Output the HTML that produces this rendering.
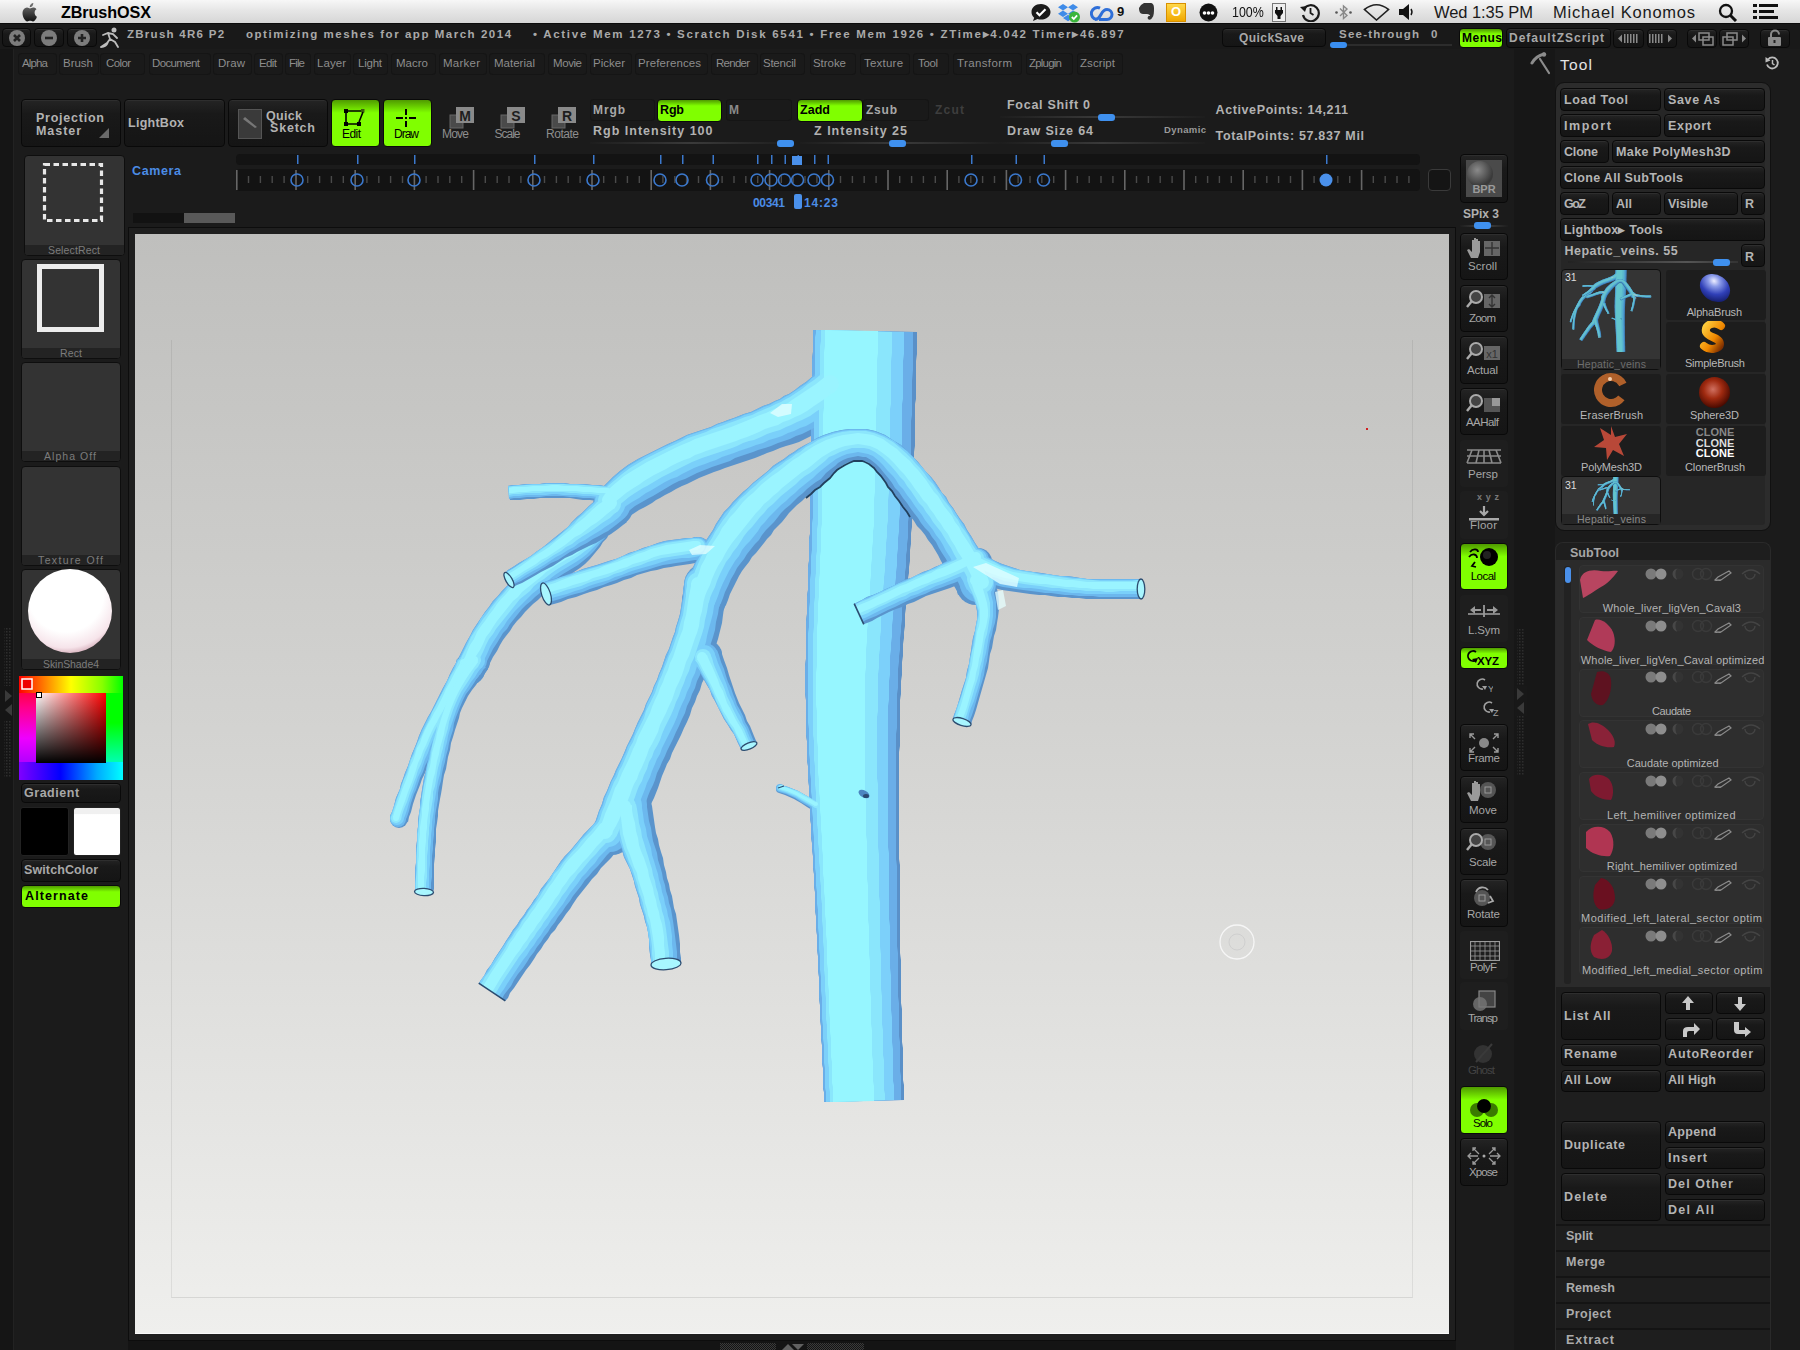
<!DOCTYPE html>
<html><head><meta charset="utf-8">
<style>
*{margin:0;padding:0;box-sizing:border-box}
html,body{width:1800px;height:1350px;overflow:hidden;background:#1b1b1b;font-family:"Liberation Sans",sans-serif}
.a{position:absolute}
.t{white-space:nowrap;line-height:1}
.mb{background:linear-gradient(#f7f7f7,#e6e6e6 45%,#d6d6d6)}
.bt{background:linear-gradient(#242424,#191919 30%,#151515);border:1px solid #090909;border-radius:4px;box-shadow:inset 0 1px 0 #2e2e2e}
.gb{background:linear-gradient(#4f9a00,#80ff00 28%,#80ff00);border:1px solid #0a0a0a;border-radius:4px}
.mn{background:#1a1a1a;border-radius:4px;box-shadow:inset 0 0 0 1px #151515}
.dk{background:#131313;border-radius:4px}
.tile{background:#333;border:1px solid #0e0e0e;border-radius:4px}
.lbl{background:#222}
#canvasframe{left:128px;top:227px;width:1328px;height:1114px;background:#1f1f1f;border:1px solid #0d0d0d}
#canvas{left:135px;top:234px;width:1314px;height:1100px;background:linear-gradient(#bfbfbd,#d3d3d1 45%,#efefed);overflow:hidden}
</style></head><body>
<div class="a" style="left:0;top:48px;width:14px;height:1302px;background:#151515;border-right:1px solid #222"></div>
<div class="a" style="left:1514px;top:48px;width:41px;height:1302px;background:#171717"></div>
<div class="a mb" style="left:0px;top:0px;width:1800px;height:23px;"></div>
<div class="a " style="left:0px;top:23px;width:1800px;height:1px;background:#0c0c0c"></div>
<svg class="a" style="left:21px;top:2px" width="20" height="20" viewBox="0 0 20 20"><defs><linearGradient id="ap" x1="0" y1="0" x2="0" y2="1"><stop offset="0" stop-color="#777"/><stop offset="1" stop-color="#111"/></linearGradient></defs><path fill="url(#ap)" d="M13.6 10.6c0-2.2 1.8-3.2 1.9-3.3-1-1.5-2.6-1.7-3.2-1.7-1.4-.1-2.6.8-3.3.8-.7 0-1.7-.8-2.9-.8C4.6 5.6 3.1 6.5 2.3 8c-1.6 2.8-.4 6.9 1.1 9.2.8 1.1 1.7 2.3 2.8 2.3 1.1 0 1.6-.7 2.9-.7 1.4 0 1.7.7 2.9.7 1.2 0 2-1.1 2.7-2.2.9-1.3 1.2-2.5 1.2-2.6 0 0-2.3-.9-2.3-4.1zM11.4 4c.6-.8 1-1.8.9-2.9-.9 0-2 .6-2.6 1.4-.6.6-1.1 1.7-.9 2.7 1 .1 2-.5 2.6-1.2z"/></svg>
<div class="a t" style="left:61.0px;top:4.4px;font-size:16.2px;font-weight:bold;color:#000;letter-spacing:-0.11px;">ZBrushOSX</div>
<svg class="a" style="left:1030px;top:3px" width="22" height="19" viewBox="0 0 22 19"><path fill="#1a1a1a" d="M11 1C5.5 1 1.5 4.5 1.5 9c0 2.3 1 4.3 2.7 5.7L3 18l4.5-2c1.1.4 2.3.6 3.5.6 5.5 0 9.5-3.5 9.5-7.6S16.5 1 11 1z"/><path fill="none" stroke="#fff" stroke-width="2.2" d="M6.5 9.2l3 3 6-6"/></svg>
<svg class="a" style="left:1057px;top:3px" width="24" height="20" viewBox="0 0 24 20"><path fill="#3f8be8" d="M6 1l5 3.2-5 3.3L1 4.2zM16 1l5 3.2-5 3.3-5-3.3zM1 10.8l5-3.3 5 3.3-5 3.2zM21 10.8l-5-3.3-5 3.3 5 3.2zM6 15l5-3.2 5 3.2-5 3.2z"/><circle cx="17.5" cy="14" r="5.5" fill="#3bb53b"/><path fill="none" stroke="#fff" stroke-width="1.8" d="M14.8 14l2 2 3.3-3.6"/></svg>
<svg class="a" style="left:1090px;top:4px" width="24" height="17" viewBox="0 0 24 17"><path fill="none" stroke="#2f6fd8" stroke-width="3" d="M7 15.5a6 6 0 1 1 3-11.4M9 15.5h8a5 5 0 0 0 0-10c-3 0-4.6 2.3-6 5s-3 5-6 5"/></svg>
<div class="a t" style="left:1117.0px;top:5.0px;font-size:13.0px;font-weight:bold;color:#111;">9</div>
<svg class="a" style="left:1137px;top:2px" width="19" height="20" viewBox="0 0 19 20"><path fill="#333" d="M4 3l3-2h6c3 0 4 2 4 5 0 4 0 8-2 10-1 2-3 2-4 1-1-1 0-3 1-3h1c0-1-1-2-3-2H6C3 12 2 9 2 6z"/></svg>
<div class="a " style="left:1166px;top:3px;width:20px;height:19px;background:linear-gradient(#ffd84a,#f0a800);border:1px solid #d89000"></div>
<div class="a t" style="left:1171.0px;top:4.5px;font-size:13.0px;font-weight:bold;color:#fff;">O</div>
<svg class="a" style="left:1199px;top:3px" width="19" height="19"><circle cx="9.5" cy="9.5" r="9" fill="#111"/><circle cx="5.5" cy="10" r="1.8" fill="#fff"/><circle cx="9.5" cy="10" r="1.8" fill="#fff"/><circle cx="13.5" cy="10" r="1.8" fill="#fff"/></svg>
<div class="a t" style="left:1232px;top:3.5px;font-size:15.5px;color:#111;transform:scaleX(0.8);transform-origin:0 0">100%</div>
<svg class="a" style="left:1272px;top:3px" width="14" height="19"><rect x="0.5" y="0.5" width="13" height="18" fill="#eee" stroke="#777"/><path fill="#111" d="M4 4h1.5v3H8.5V4H10v3h1v3l-2.5 3v3h-3v-3L3 10V7h1z"/></svg>
<svg class="a" style="left:1299px;top:3px" width="21" height="19" viewBox="0 0 21 19"><path fill="none" stroke="#1a1a1a" stroke-width="2.2" d="M5 6a8 8 0 1 1-1 6"/><path fill="#1a1a1a" d="M1 4l5 5 2-6z"/><path fill="none" stroke="#1a1a1a" stroke-width="1.8" d="M11.5 5v5l3 2"/></svg>
<svg class="a" style="left:1334px;top:4px" width="19" height="17" viewBox="0 0 19 17"><path fill="none" stroke="#888" stroke-width="1.4" d="M6 4.5l7 7-3.5 3V2l3.5 3-7 7"/><circle cx="2.5" cy="8.5" r="1.3" fill="#555"/><circle cx="16.5" cy="8.5" r="1.3" fill="#555"/></svg>
<svg class="a" style="left:1363px;top:3px" width="27" height="18" viewBox="0 0 27 18"><path fill="none" stroke="#222" stroke-width="1.6" d="M1.5 6.5Q13.5-3 25.5 6.5L13.5 17z"/></svg>
<svg class="a" style="left:1399px;top:4px" width="15" height="16" viewBox="0 0 15 16"><path fill="#111" d="M0 5h4l6-5v16l-6-5H0z"/><path fill="none" stroke="#111" stroke-width="1.4" d="M12 5q2 3 0 6"/></svg>
<div class="a t" style="left:1434.0px;top:3.6px;font-size:16.5px;font-weight:normal;color:#1a1a1a;letter-spacing:-0.07px;">Wed 1:35 PM</div>
<div class="a t" style="left:1553.0px;top:3.6px;font-size:16.5px;font-weight:normal;color:#1a1a1a;letter-spacing:0.78px;">Michael Konomos</div>
<svg class="a" style="left:1718px;top:3px" width="20" height="19" viewBox="0 0 20 19"><circle cx="8" cy="8" r="6" fill="none" stroke="#111" stroke-width="2.3"/><path stroke="#111" stroke-width="3" d="M12.5 12.5l5.5 5.5"/></svg>
<svg class="a" style="left:1753px;top:4px" width="25" height="16" viewBox="0 0 25 16"><path fill="#111" d="M0 0h4v3H0zM6 0h19v3H6zM0 6h4v3H0zM6 6h15v3H6zM0 12h4v3H0zM6 12h19v3H6z"/></svg>
<div class="a " style="left:0px;top:24px;width:1800px;height:25px;background:#191919"></div>
<div class="a bt" style="left:2px;top:28px;width:29px;height:19px;"></div>
<svg class="a" style="left:8px;top:29px" width="18" height="18" viewBox="-9 -9 18 18"><circle r="8" fill="#7c7c7c"/><path d="M-3,-3L3,3M3,-3L-3,3" stroke="#222" stroke-width="2.6"/></svg>
<div class="a bt" style="left:34px;top:28px;width:30px;height:19px;"></div>
<svg class="a" style="left:40px;top:29px" width="18" height="18" viewBox="-9 -9 18 18"><circle r="8" fill="#7c7c7c"/><path d="M-4,0H4" stroke="#222" stroke-width="2.6"/></svg>
<div class="a bt" style="left:67px;top:28px;width:30px;height:19px;"></div>
<svg class="a" style="left:73px;top:29px" width="18" height="18" viewBox="-9 -9 18 18"><circle r="8" fill="#7c7c7c"/><path d="M-4,0H4M0,-4V4" stroke="#222" stroke-width="2.6"/></svg>
<svg class="a" style="left:99px;top:27px" width="22" height="21" viewBox="0 0 22 21"><g fill="none" stroke="#bdbdbd" stroke-width="1.8" stroke-linecap="round"><circle cx="15" cy="3" r="1.6" fill="#bdbdbd"/><path d="M4 8l5-2 5 1 4 4M9 6l2 6-3 4-6 4M11 12l5 3 3 5M2 20c3 0 6-2 7-5"/></g></svg>
<div class="a t" style="left:127.0px;top:29.4px;font-size:11.5px;font-weight:bold;color:#a9a9a9;letter-spacing:1.27px;">ZBrush 4R6 P2</div>
<div class="a t" style="left:246.0px;top:29.4px;font-size:11.5px;font-weight:bold;color:#a9a9a9;letter-spacing:1.53px;">optimizing meshes for app March 2014</div>
<div class="a t" style="left:533.0px;top:29.4px;font-size:11.5px;font-weight:bold;color:#a9a9a9;letter-spacing:1.71px;">&#8226; Active Mem 1273 &#8226; Scratch Disk 6541 &#8226; Free Mem 1926 &#8226; ZTime&#9656;4.042 Timer&#9656;46.897</div>
<div class="a bt" style="left:1222px;top:28px;width:104px;height:19px;"></div>
<div class="a t" style="left:1239.0px;top:31.6px;font-size:12.0px;font-weight:bold;color:#a8a8a8;letter-spacing:0.45px;">QuickSave</div>
<div class="a t" style="left:1339.0px;top:28.6px;font-size:11.5px;font-weight:bold;color:#a8a8a8;letter-spacing:1.23px;">See-through</div>
<div class="a t" style="left:1431.0px;top:28.6px;font-size:11.5px;font-weight:bold;color:#a8a8a8;">0</div>
<div class="a " style="left:1332px;top:44px;width:120px;height:2px;background:#2c2c2c"></div>
<div class="a " style="left:1330px;top:42px;width:17px;height:6px;background:#3a8ef0;border-radius:3px"></div>
<div class="a gb" style="left:1459px;top:28px;width:44px;height:20px;"></div>
<div class="a t" style="left:1462.0px;top:31.6px;font-size:12.0px;font-weight:bold;color:#000;letter-spacing:0.50px;">Menus</div>
<div class="a bt" style="left:1506px;top:28px;width:105px;height:20px;"></div>
<div class="a t" style="left:1509.0px;top:31.6px;font-size:12.0px;font-weight:bold;color:#a8a8a8;letter-spacing:1.00px;">DefaultZScript</div>
<div class="a bt" style="left:1613px;top:29px;width:31px;height:19px;"></div>
<div class="a bt" style="left:1647px;top:29px;width:30px;height:19px;"></div>
<div class="a bt" style="left:1687px;top:29px;width:30px;height:19px;"></div>
<div class="a bt" style="left:1719px;top:29px;width:30px;height:19px;"></div>
<div class="a bt" style="left:1760px;top:29px;width:30px;height:19px;"></div>
<svg class="a" style="left:1613px;top:29px" width="64" height="19"><g fill="#8a8a8a"><path d="M5 9.5l4-4v8z"/><path d="M11 5h1.5v9H11zM14 5h1.5v9H14zM17 5h1.5v9H17zM20 5h1.5v9H20zM23 5h1.5v9H23z"/><path d="M36 5h1.5v9H36zM39 5h1.5v9H39zM42 5h1.5v9H42zM45 5h1.5v9H45zM48 5h1.5v9H48z"/><path d="M59 9.5l-4-4v8z"/></g></svg>
<svg class="a" style="left:1687px;top:29px" width="64" height="19"><g fill="none" stroke="#8a8a8a" stroke-width="1.5"><rect x="12" y="4" width="10" height="7"/><rect x="16" y="8" width="10" height="8"/><rect x="40" y="4" width="10" height="7"/><rect x="36" y="8" width="10" height="8"/></g><g fill="#8a8a8a"><path d="M5 9.5l4-4v8z"/><path d="M59 9.5l-4-4v8z"/></g></svg>
<svg class="a" style="left:1760px;top:29px" width="30" height="19"><path fill="none" stroke="#8a8a8a" stroke-width="2" d="M11 8V5.5a4 4 0 0 1 8 0"/><rect x="8" y="8" width="13" height="9" rx="1" fill="#8a8a8a"/><rect x="13.5" y="11" width="2" height="3" fill="#222"/></svg>
<div class="a mn" style="left:18px;top:53px;width:39px;height:22px;"></div>
<div class="a t" style="left:22.0px;top:58.1px;font-size:11.5px;font-weight:normal;color:#8d8d8d;letter-spacing:-0.85px;">Alpha</div>
<div class="a mn" style="left:59px;top:53px;width:40px;height:22px;"></div>
<div class="a t" style="left:63.0px;top:58.1px;font-size:11.5px;font-weight:normal;color:#8d8d8d;letter-spacing:-0.01px;">Brush</div>
<div class="a mn" style="left:100px;top:53px;width:45px;height:22px;"></div>
<div class="a t" style="left:106.0px;top:58.1px;font-size:11.5px;font-weight:normal;color:#8d8d8d;letter-spacing:-0.62px;">Color</div>
<div class="a mn" style="left:149px;top:53px;width:62px;height:22px;"></div>
<div class="a t" style="left:152.0px;top:58.1px;font-size:11.5px;font-weight:normal;color:#8d8d8d;letter-spacing:-0.63px;">Document</div>
<div class="a mn" style="left:213px;top:53px;width:39px;height:22px;"></div>
<div class="a t" style="left:218.0px;top:58.1px;font-size:11.5px;font-weight:normal;color:#8d8d8d;letter-spacing:0.06px;">Draw</div>
<div class="a mn" style="left:254px;top:53px;width:29px;height:22px;"></div>
<div class="a t" style="left:259.0px;top:58.1px;font-size:11.5px;font-weight:normal;color:#8d8d8d;letter-spacing:-0.61px;">Edit</div>
<div class="a mn" style="left:285px;top:53px;width:26px;height:22px;"></div>
<div class="a t" style="left:289.0px;top:58.1px;font-size:11.5px;font-weight:normal;color:#8d8d8d;letter-spacing:-0.84px;">File</div>
<div class="a mn" style="left:314px;top:53px;width:37px;height:22px;"></div>
<div class="a t" style="left:317.0px;top:58.1px;font-size:11.5px;font-weight:normal;color:#8d8d8d;letter-spacing:0.06px;">Layer</div>
<div class="a mn" style="left:353px;top:53px;width:35px;height:22px;"></div>
<div class="a t" style="left:358.0px;top:58.1px;font-size:11.5px;font-weight:normal;color:#8d8d8d;letter-spacing:-0.23px;">Light</div>
<div class="a mn" style="left:391px;top:53px;width:45px;height:22px;"></div>
<div class="a t" style="left:396.0px;top:58.1px;font-size:11.5px;font-weight:normal;color:#8d8d8d;letter-spacing:0.01px;">Macro</div>
<div class="a mn" style="left:439px;top:53px;width:48px;height:22px;"></div>
<div class="a t" style="left:443.0px;top:58.1px;font-size:11.5px;font-weight:normal;color:#8d8d8d;letter-spacing:0.24px;">Marker</div>
<div class="a mn" style="left:489px;top:53px;width:56px;height:22px;"></div>
<div class="a t" style="left:494.0px;top:58.1px;font-size:11.5px;font-weight:normal;color:#8d8d8d;letter-spacing:0.01px;">Material</div>
<div class="a mn" style="left:548px;top:53px;width:39px;height:22px;"></div>
<div class="a t" style="left:553.0px;top:58.1px;font-size:11.5px;font-weight:normal;color:#8d8d8d;letter-spacing:-0.42px;">Movie</div>
<div class="a mn" style="left:590px;top:53px;width:42px;height:22px;"></div>
<div class="a t" style="left:593.0px;top:58.1px;font-size:11.5px;font-weight:normal;color:#8d8d8d;letter-spacing:0.01px;">Picker</div>
<div class="a mn" style="left:635px;top:53px;width:73px;height:22px;"></div>
<div class="a t" style="left:638.0px;top:58.1px;font-size:11.5px;font-weight:normal;color:#8d8d8d;letter-spacing:0.10px;">Preferences</div>
<div class="a mn" style="left:711px;top:53px;width:47px;height:22px;"></div>
<div class="a t" style="left:716.0px;top:58.1px;font-size:11.5px;font-weight:normal;color:#8d8d8d;letter-spacing:-0.74px;">Render</div>
<div class="a mn" style="left:760px;top:53px;width:45px;height:22px;"></div>
<div class="a t" style="left:763.0px;top:58.1px;font-size:11.5px;font-weight:normal;color:#8d8d8d;letter-spacing:-0.25px;">Stencil</div>
<div class="a mn" style="left:810px;top:53px;width:46px;height:22px;"></div>
<div class="a t" style="left:813.0px;top:58.1px;font-size:11.5px;font-weight:normal;color:#8d8d8d;letter-spacing:-0.05px;">Stroke</div>
<div class="a mn" style="left:860px;top:53px;width:50px;height:22px;"></div>
<div class="a t" style="left:864.0px;top:58.1px;font-size:11.5px;font-weight:normal;color:#8d8d8d;letter-spacing:0.22px;">Texture</div>
<div class="a mn" style="left:913px;top:53px;width:36px;height:22px;"></div>
<div class="a t" style="left:918.0px;top:58.1px;font-size:11.5px;font-weight:normal;color:#8d8d8d;letter-spacing:-0.37px;">Tool</div>
<div class="a mn" style="left:953px;top:53px;width:69px;height:22px;"></div>
<div class="a t" style="left:957.0px;top:58.1px;font-size:11.5px;font-weight:normal;color:#8d8d8d;letter-spacing:0.38px;">Transform</div>
<div class="a mn" style="left:1026px;top:53px;width:47px;height:22px;"></div>
<div class="a t" style="left:1029.0px;top:58.1px;font-size:11.5px;font-weight:normal;color:#8d8d8d;letter-spacing:-0.79px;">Zplugin</div>
<div class="a mn" style="left:1077px;top:53px;width:46px;height:22px;"></div>
<div class="a t" style="left:1080.0px;top:58.1px;font-size:11.5px;font-weight:normal;color:#8d8d8d;letter-spacing:0.08px;">Zscript</div>
<svg class="a" style="left:1530px;top:51px" width="22" height="24" viewBox="0 0 22 24"><g stroke="#8c8c8c" stroke-linecap="round"><path d="M10 8l9 14" stroke-width="2.2"/><path d="M2 12q4-7 12-9" stroke-width="3" fill="none"/><circle cx="14" cy="3.5" r="2.2" fill="#8c8c8c" stroke="none"/></g></svg>
<div class="a t" style="left:1560.0px;top:57.2px;font-size:15.5px;font-weight:normal;color:#e4e4e4;letter-spacing:1.19px;">Tool</div>
<svg class="a" style="left:1764px;top:55px" width="17" height="16" viewBox="0 0 17 16"><path fill="none" stroke="#bcbcbc" stroke-width="1.8" d="M4 4.5a5.5 5.5 0 1 1-1 5"/><path fill="#bcbcbc" d="M1.5 2l5 3.5-5 2z"/><path stroke="#bcbcbc" stroke-width="1.5" d="M8.5 5v3.5l2 1.5"/></svg>
<div id="canvasframe" class="a"></div>
<div id="canvas" class="a"><div class="a" style="left:36px;top:106px;width:1242px;height:958px;border-left:1px solid rgba(0,0,0,0.07);border-right:1px solid rgba(0,0,0,0.07);border-bottom:1px solid rgba(0,0,0,0.09)"></div></div>
<svg class="a" style="left:0;top:0" width="1800" height="1350" viewBox="0 0 1800 1350"><defs><g id="veinsym"><g><path fill="#5a94cc" d="M457,659 456,663 453,668 450,674 447,681 443,688 440,694 437,700 434,706 431,712 428,717 425,723 422,729 419,736 417,742 415,747 412,754 410,760 408,766 405,773 403,779 401,784 400,789 396,798 394,806 392,812 390,816 L408,822 409,817 411,812 413,804 416,795 418,790 420,785 422,779 425,773 427,767 430,760 432,754 435,749 437,744 440,737 443,732 445,726 448,721 451,716 455,710 458,704 462,698 466,691 470,685 473,679 476,674 479,671Z"/><circle fill="#5a94cc" cx="468" cy="665" r="12"/><circle fill="#5a94cc" cx="399" cy="819" r="9"/><path fill="#5a94cc" d="M468,655 466,658 464,662 461,667 457,673 454,679 450,686 447,693 444,700 442,706 440,712 438,719 436,725 434,732 433,739 431,746 430,752 428,759 427,765 426,771 424,778 423,784 422,790 421,797 420,802 420,808 419,814 418,821 418,827 417,834 417,841 416,848 416,856 416,863 415,870 415,877 415,883 415,888 415,892 L433,892 434,889 434,883 434,878 434,871 434,864 435,856 435,849 436,842 436,835 436,829 437,823 438,816 438,811 439,805 440,799 441,794 442,788 443,781 444,775 446,769 447,763 448,757 450,750 451,743 453,737 455,730 457,724 459,718 460,713 462,708 465,702 468,696 472,690 476,685 479,680 483,676 486,672 488,669Z"/><circle fill="#5a94cc" cx="478" cy="662" r="12"/><path fill="#5a94cc" d="M600,531 596,533 590,535 584,537 577,540 571,542 566,544 561,546 555,549 549,553 542,557 537,560 532,564 527,568 522,572 517,577 512,581 507,586 502,591 498,596 493,601 489,607 485,612 481,618 477,624 473,630 470,636 466,643 463,649 460,655 458,660 457,663 L483,677 485,673 488,668 490,663 493,657 497,651 500,645 503,640 506,636 510,631 513,626 517,621 521,617 525,612 529,608 533,604 538,600 542,596 547,592 551,588 556,584 560,581 565,578 569,575 574,572 580,568 585,564 590,559 595,553 600,547 603,542 606,539Z"/><circle fill="#5a94cc" cx="603" cy="535" r="5"/><circle fill="#5a94cc" cx="470" cy="670" r="15"/></g><g><path fill="#6cb8ee" d="M457,659 456,663 453,668 450,674 447,681 443,688 440,694 437,700 434,706 431,712 428,717 425,723 422,729 419,736 417,742 415,747 412,754 410,760 408,766 405,773 403,779 401,784 400,789 396,798 394,806 392,812 390,816 L405,821 407,817 409,811 411,803 414,794 416,790 418,784 420,778 423,772 425,766 428,760 430,754 432,748 435,743 438,736 440,731 443,725 446,720 449,714 453,709 456,703 460,697 463,690 467,684 471,678 474,673 476,669Z"/><circle fill="#6cb8ee" cx="467" cy="664" r="10"/><circle fill="#6cb8ee" cx="398" cy="819" r="8"/><path fill="#6cb8ee" d="M468,655 466,658 464,662 461,667 457,673 454,679 450,686 447,693 444,700 442,706 440,712 438,719 436,725 434,732 433,739 431,746 430,752 428,759 427,765 426,771 424,778 423,784 422,790 421,797 420,802 420,808 419,814 418,821 418,827 417,834 417,841 416,848 416,856 416,863 415,870 415,877 415,883 415,888 415,892 L431,892 431,888 431,883 432,877 432,871 432,864 432,856 433,849 433,842 434,835 434,829 435,822 435,816 436,810 437,805 438,799 438,793 439,787 441,781 442,774 443,769 445,762 446,756 448,749 449,743 451,736 453,730 454,723 456,717 458,712 460,707 463,700 466,694 470,689 474,683 477,678 480,674 483,670 486,667Z"/><circle fill="#6cb8ee" cx="477" cy="661" r="10"/><path fill="#6cb8ee" d="M600,531 596,533 590,535 584,537 577,540 571,542 566,544 561,546 555,549 549,553 542,557 537,560 532,564 527,568 522,572 517,577 512,581 507,586 502,591 498,596 493,601 489,607 485,612 481,618 477,624 473,630 470,636 466,643 463,649 460,655 458,660 457,663 L480,675 482,672 484,667 487,661 490,655 493,649 497,643 500,638 503,633 507,629 510,624 514,619 518,614 522,609 526,605 531,601 535,597 540,593 544,589 549,585 553,581 557,578 563,574 568,571 573,568 578,565 583,561 589,556 594,551 598,546 602,541 605,538Z"/><circle fill="#6cb8ee" cx="603" cy="534" r="4"/><circle fill="#6cb8ee" cx="468" cy="669" r="13"/></g><g><path fill="#7ad0fa" d="M458,659 456,663 454,668 451,674 447,681 444,688 441,695 438,700 435,706 432,712 429,717 426,723 423,729 420,736 418,742 415,748 413,754 410,760 408,767 406,773 404,779 402,784 400,789 397,798 394,806 392,812 391,816 L403,820 405,816 407,810 409,803 412,794 414,789 416,783 418,777 421,771 423,765 425,759 428,753 430,747 432,742 435,735 438,729 441,724 444,719 447,713 450,707 454,702 457,695 461,689 465,682 468,676 471,672 473,668Z"/><circle fill="#7ad0fa" cx="466" cy="664" r="9"/><circle fill="#7ad0fa" cx="397" cy="818" r="7"/><path fill="#7ad0fa" d="M468,656 467,659 464,663 461,667 458,673 454,679 451,686 447,693 444,700 442,706 440,712 438,719 437,725 435,732 433,739 432,746 430,752 429,759 427,765 426,771 425,778 424,784 423,791 422,797 421,803 420,808 419,814 419,821 418,827 417,834 417,841 417,848 416,856 416,863 416,870 416,877 415,883 415,888 415,892 L429,892 429,888 429,883 429,877 429,871 430,864 430,856 430,849 431,842 431,835 432,828 432,822 433,816 434,810 434,804 435,799 436,793 437,787 438,781 440,774 441,768 442,762 444,756 445,749 447,742 448,736 450,729 452,723 454,717 456,711 458,706 461,699 464,693 468,687 471,682 475,677 478,672 481,668 483,665Z"/><circle fill="#7ad0fa" cx="476" cy="661" r="9"/><path fill="#7ad0fa" d="M600,531 596,533 590,535 584,538 577,540 571,543 566,545 561,547 556,550 549,553 543,557 538,561 533,565 528,568 523,573 517,577 512,582 507,587 503,592 498,597 494,602 490,607 485,613 481,618 478,624 474,630 470,637 467,643 464,650 461,656 459,660 457,664 L477,673 478,670 481,665 484,660 487,654 490,647 493,642 497,636 500,631 504,626 507,621 511,616 515,611 519,607 524,602 528,598 532,594 537,590 542,586 547,582 551,578 555,575 561,571 566,568 571,565 576,562 582,558 587,554 592,549 597,544 601,540 604,537Z"/><circle fill="#7ad0fa" cx="602" cy="534" r="4"/><circle fill="#7ad0fa" cx="467" cy="668" r="11"/></g><g><path fill="#8ce6fc" d="M459,660 457,664 455,669 451,675 448,682 445,688 441,695 438,701 435,707 432,712 430,718 427,724 424,730 421,737 418,742 416,748 414,754 411,760 409,767 407,773 404,779 402,785 401,789 397,799 395,806 393,812 392,817 L401,820 402,815 404,809 407,802 410,793 412,788 414,782 416,777 418,770 421,764 423,758 425,752 428,746 430,741 433,734 436,728 439,723 442,717 445,712 448,706 451,700 455,694 458,687 462,681 465,675 468,670 470,666Z"/><circle fill="#8ce6fc" cx="465" cy="663" r="6"/><circle fill="#8ce6fc" cx="396" cy="818" r="5"/><path fill="#8ce6fc" d="M469,656 468,659 465,663 462,668 459,673 455,680 451,686 448,693 445,701 443,707 441,713 439,719 437,726 436,732 434,739 432,746 431,753 430,759 428,765 427,771 426,778 424,785 423,791 422,797 422,803 421,809 420,815 419,821 419,827 418,834 418,841 417,848 417,856 417,863 417,870 416,877 416,883 416,888 416,892 L426,892 426,888 426,883 427,877 427,871 427,864 427,856 428,849 428,841 429,834 429,828 430,822 430,816 431,810 432,804 433,798 433,792 435,786 436,780 437,773 438,768 440,761 441,755 443,748 444,742 446,735 448,728 449,722 451,716 453,710 455,705 458,698 461,692 465,686 469,680 472,675 475,670 478,667 480,663Z"/><circle fill="#8ce6fc" cx="475" cy="660" r="6"/><path fill="#8ce6fc" d="M600,532 596,533 591,536 584,538 578,541 572,544 567,546 562,548 556,551 550,554 544,558 539,562 534,566 529,570 524,574 518,578 513,583 508,588 504,593 499,598 495,603 491,608 487,614 483,619 479,625 475,631 471,637 468,644 465,650 462,656 460,661 458,664 L473,671 475,668 477,663 480,658 483,652 486,645 489,639 493,634 496,629 500,624 504,619 508,614 512,609 516,604 520,599 525,595 530,591 534,586 539,582 544,579 549,575 553,572 559,568 564,565 569,562 574,559 580,555 585,551 591,547 596,542 600,539 604,536Z"/><circle fill="#8ce6fc" cx="602" cy="534" r="3"/><circle fill="#8ce6fc" cx="466" cy="668" r="8"/></g><g><path fill="#9af4ff" d="M461,661 459,665 456,670 453,676 450,682 446,689 443,696 440,702 437,708 434,713 431,719 428,724 425,730 422,737 420,743 417,748 415,755 413,761 410,767 408,774 406,780 404,785 402,790 399,799 396,807 394,813 393,817 L399,819 400,815 402,809 405,801 408,792 410,787 412,782 414,776 416,770 418,763 421,757 423,751 426,745 428,740 431,733 434,727 437,722 440,716 443,711 446,705 449,699 452,693 456,686 460,679 463,674 466,669 468,665Z"/><circle fill="#9af4ff" cx="464" cy="663" r="4"/><circle fill="#9af4ff" cx="396" cy="818" r="3"/><path fill="#9af4ff" d="M471,657 469,660 467,664 464,669 460,674 457,681 453,687 450,694 447,701 445,707 443,713 441,719 439,726 437,733 436,739 434,746 432,753 431,760 430,766 428,772 427,778 426,785 425,791 424,797 423,803 422,809 422,815 421,821 420,827 420,834 419,841 419,848 419,856 418,863 418,870 418,877 418,883 418,888 417,892 L424,892 424,888 424,883 424,877 425,871 425,863 425,856 425,849 426,841 426,834 427,828 427,822 428,815 429,809 429,804 430,798 431,792 432,786 433,780 435,773 436,767 437,761 439,754 440,748 442,741 444,734 445,728 447,721 449,715 451,709 453,704 456,697 459,691 463,684 466,679 470,673 473,669 476,665 478,662Z"/><circle fill="#9af4ff" cx="474" cy="660" r="4"/><path fill="#9af4ff" d="M601,532 597,534 592,537 585,539 579,543 573,545 568,548 563,550 557,553 551,556 545,560 540,564 535,568 530,571 525,576 520,580 515,585 510,589 506,594 501,599 497,604 493,610 489,615 485,621 481,626 477,632 474,639 470,645 467,652 465,657 462,662 461,665 L470,670 471,666 474,662 476,656 480,650 483,644 486,637 490,632 493,627 497,621 501,616 505,611 509,606 513,601 518,597 522,592 527,588 532,584 537,580 542,576 546,572 551,569 557,565 562,562 567,559 573,556 578,553 583,549 589,545 595,541 600,537 603,535Z"/><circle fill="#9af4ff" cx="602" cy="534" r="2"/><circle fill="#9af4ff" cx="465" cy="668" r="5"/></g><g><path fill="#5a90c8" d="M813,330 813,333 813,337 813,341 813,346 813,352 812,359 812,368 812,379 812,383 812,388 812,393 812,398 812,403 812,408 812,414 811,420 811,425 811,432 811,438 811,444 811,451 811,457 811,464 811,470 811,477 811,484 811,491 810,498 810,505 810,511 810,518 810,523 810,529 810,534 809,539 809,545 809,550 809,556 809,561 808,567 808,573 808,578 808,584 808,590 807,596 807,602 807,608 807,614 806,621 806,627 806,633 806,640 806,646 806,653 806,659 805,666 805,672 805,679 805,686 805,693 806,700 806,705 806,711 806,717 806,723 806,729 806,735 807,741 807,748 807,754 807,760 808,766 808,773 808,779 809,786 809,792 809,798 810,805 810,811 810,818 811,824 811,830 811,837 812,843 812,849 813,856 813,862 813,868 814,874 814,880 814,886 815,892 815,898 815,904 815,910 816,916 816,921 816,928 817,935 817,942 817,949 818,956 818,963 818,970 819,977 819,984 819,991 819,998 820,1005 820,1012 820,1019 821,1026 821,1032 821,1039 822,1045 822,1051 822,1057 822,1063 823,1068 823,1073 823,1078 823,1083 823,1088 824,1092 824,1096 824,1099 824,1102 L904,1100 904,1096 904,1093 904,1089 904,1085 903,1080 903,1076 903,1071 903,1065 903,1060 903,1054 903,1048 902,1042 902,1036 902,1029 902,1023 902,1016 902,1009 901,1003 901,996 901,989 901,982 901,974 901,967 901,960 900,953 900,946 900,939 900,932 900,926 900,919 900,913 900,907 900,902 900,896 900,890 900,884 900,878 900,872 900,865 899,859 899,853 899,847 899,840 899,834 899,828 899,821 899,815 899,809 899,802 899,796 899,790 899,783 899,777 899,771 899,765 899,758 899,752 900,746 900,740 900,734 900,728 900,723 900,717 900,711 900,706 900,700 901,694 901,688 901,681 902,675 902,669 902,662 903,656 903,650 903,644 904,638 904,632 905,626 905,620 905,614 906,608 906,602 907,596 907,590 908,584 908,578 909,573 909,567 910,561 910,556 910,550 911,544 911,539 911,533 912,527 912,522 912,515 913,508 913,501 913,494 913,487 914,480 914,473 914,466 914,459 914,452 915,446 915,440 915,433 915,427 915,421 915,415 915,410 915,404 916,399 916,394 916,390 916,385 916,381 916,370 916,361 917,354 917,348 917,343 917,339 917,335 917,332Z"/><path fill="#5a94cc" d="M818,802 812,799 805,795 798,791 788,787 781,785 L779,793 785,795 794,799 801,803 807,807 812,810Z"/><circle fill="#5a94cc" cx="815" cy="806" r="5"/><circle fill="#5a94cc" cx="780" cy="789" r="4"/><path fill="#5a94cc" d="M820,371 816,373 812,377 806,382 800,386 795,390 789,394 784,396 780,399 775,401 769,404 763,406 757,409 751,412 744,414 739,416 734,418 728,420 723,422 717,424 711,427 705,429 699,431 693,433 687,435 681,438 675,441 668,444 662,447 656,450 650,453 644,456 638,459 633,462 628,465 620,471 613,477 607,483 603,487 600,490 L624,520 628,517 633,514 639,510 645,507 652,503 656,500 660,498 665,495 671,492 676,489 682,486 687,484 693,481 699,478 704,476 709,474 714,472 720,470 725,468 731,466 737,464 743,462 749,460 755,458 760,456 767,453 773,451 780,448 786,446 793,444 799,442 805,439 811,436 819,432 827,427 835,423 841,419 846,416 850,413Z"/><circle fill="#5a94cc" cx="835" cy="392" r="26"/><circle fill="#5a94cc" cx="612" cy="505" r="19"/><path fill="#5a94cc" d="M609,486 604,486 599,485 592,485 584,484 577,484 570,484 564,483 558,483 552,483 546,483 540,484 533,484 526,484 519,485 513,485 508,486 L510,500 514,500 520,500 527,499 534,499 540,498 546,498 552,498 557,498 563,498 570,498 576,499 583,500 590,500 597,501 603,502 607,502Z"/><circle fill="#5a94cc" cx="608" cy="494" r="8"/><path fill="#5a94cc" d="M603,494 600,497 596,500 589,506 586,509 582,513 577,517 572,522 568,527 563,531 558,535 553,539 547,544 542,548 536,552 531,556 526,559 519,563 513,567 508,570 505,573 L513,587 517,585 522,583 529,579 536,575 541,572 547,569 553,566 559,562 565,558 572,555 577,552 583,549 589,546 596,543 601,540 606,537 611,534 618,529 623,525 627,522Z"/><circle fill="#5a94cc" cx="615" cy="508" r="18"/></g><g><path fill="#6aaee8" d="M813,330 813,333 813,337 813,341 813,346 813,352 812,359 812,368 812,379 812,383 812,388 812,393 812,398 812,403 812,408 812,414 811,420 811,425 811,432 811,438 811,444 811,451 811,457 811,464 811,470 811,477 811,484 811,491 810,498 810,505 810,511 810,518 810,523 810,529 810,534 809,539 809,545 809,550 809,556 809,561 808,567 808,573 808,578 808,584 808,590 807,596 807,602 807,608 807,614 806,621 806,627 806,633 806,640 806,646 806,653 806,659 805,666 805,672 805,679 805,686 805,693 806,700 806,705 806,711 806,717 806,723 806,729 806,735 807,741 807,748 807,754 807,760 808,766 808,773 808,779 809,786 809,792 809,798 810,805 810,811 810,818 811,824 811,830 811,837 812,843 812,849 813,856 813,862 813,868 814,874 814,880 814,886 815,892 815,898 815,904 815,910 816,916 816,921 816,928 817,935 817,942 817,949 818,956 818,963 818,970 819,977 819,984 819,991 819,998 820,1005 820,1012 820,1019 821,1026 821,1032 821,1039 822,1045 822,1051 822,1057 822,1063 823,1068 823,1073 823,1078 823,1083 823,1088 824,1092 824,1096 824,1099 824,1102 L901,1100 901,1097 901,1093 901,1089 901,1085 901,1080 901,1076 900,1071 900,1065 900,1060 900,1054 900,1048 900,1042 899,1036 899,1029 899,1023 899,1016 899,1009 899,1003 898,996 898,989 898,982 898,975 898,967 898,960 898,953 897,946 897,939 897,932 897,926 897,919 897,913 897,908 897,902 897,896 897,890 897,884 897,878 897,872 897,866 896,859 896,853 896,847 896,840 896,834 896,828 896,821 896,815 896,809 896,802 896,796 896,790 896,783 896,777 896,771 896,765 896,759 896,752 896,746 896,740 896,734 897,728 897,723 897,717 897,711 897,706 897,700 897,694 898,688 898,681 898,675 898,669 899,662 899,656 900,650 900,644 900,638 901,632 901,626 902,620 902,614 902,608 903,602 903,596 904,590 904,584 905,578 905,572 906,567 906,561 906,555 907,550 907,544 908,538 908,533 908,527 908,522 909,515 909,507 909,500 910,493 910,486 910,479 910,473 910,466 911,459 911,452 911,446 911,439 911,433 911,427 911,421 912,415 912,410 912,404 912,399 912,394 912,390 912,385 912,381 913,370 913,361 913,354 913,348 913,343 913,339 913,335 913,332Z"/><path fill="#6cb8ee" d="M818,802 812,799 805,795 798,791 788,787 781,785 L779,792 786,794 795,798 801,802 808,806 813,809Z"/><circle fill="#6cb8ee" cx="815" cy="805" r="4"/><circle fill="#6cb8ee" cx="780" cy="788" r="4"/><path fill="#6cb8ee" d="M820,371 816,373 812,377 806,382 800,386 795,390 789,394 784,396 780,399 775,401 769,404 763,406 757,409 751,412 744,414 739,416 734,418 728,420 723,422 717,424 711,427 705,429 699,431 693,433 687,435 681,438 675,441 668,444 662,447 656,450 650,453 644,456 638,459 633,462 628,465 620,471 613,477 607,483 603,487 600,490 L621,516 625,514 630,510 635,506 642,502 649,498 653,496 658,493 663,490 668,487 673,484 679,481 685,479 691,476 697,473 702,471 707,469 712,467 718,465 724,463 730,461 735,458 741,456 747,454 753,452 758,450 765,448 771,446 778,443 784,441 790,439 796,436 802,434 808,431 816,427 824,422 831,418 837,414 843,410 846,408Z"/><circle fill="#6cb8ee" cx="833" cy="389" r="23"/><circle fill="#6cb8ee" cx="611" cy="503" r="17"/><path fill="#6cb8ee" d="M609,486 604,486 599,485 592,485 584,484 577,484 570,484 564,483 558,483 552,483 546,483 540,484 533,484 526,484 519,485 513,485 508,486 L509,499 514,498 520,498 527,497 534,497 540,497 546,496 552,496 557,496 563,496 570,497 576,497 583,498 590,498 597,499 603,500 607,500Z"/><circle fill="#6cb8ee" cx="608" cy="493" r="7"/><path fill="#6cb8ee" d="M603,494 600,497 596,500 589,506 586,509 582,513 577,517 572,522 568,527 563,531 558,535 553,539 547,544 542,548 536,552 531,556 526,559 519,563 513,567 508,570 505,573 L512,586 516,583 521,581 528,577 535,573 540,570 545,567 551,563 558,560 564,556 570,552 576,549 581,546 587,543 593,539 599,536 604,533 608,531 616,525 621,521 624,518Z"/><circle fill="#6cb8ee" cx="614" cy="506" r="16"/></g><g><path fill="#7cd0fa" d="M816,330 816,333 815,337 815,341 815,346 815,352 815,359 815,368 815,379 815,383 814,388 814,393 814,398 814,403 814,408 814,414 814,420 814,426 814,432 814,438 814,444 814,451 814,457 814,464 813,470 813,477 813,484 813,491 813,498 813,505 813,511 813,518 812,523 812,529 812,534 812,539 812,545 812,550 811,556 811,561 811,567 811,573 810,579 810,584 810,590 810,596 810,602 809,608 809,615 809,621 809,627 808,633 808,640 808,646 808,653 808,659 808,666 808,672 808,679 808,686 808,693 808,700 808,705 808,711 808,717 808,723 809,729 809,735 809,741 809,748 809,754 810,760 810,766 810,773 811,779 811,785 811,792 812,798 812,805 812,811 813,818 813,824 813,830 814,837 814,843 814,849 815,856 815,862 815,868 816,874 816,880 816,886 817,892 817,898 817,904 818,910 818,916 818,921 818,928 819,935 819,942 819,949 820,956 820,963 820,970 821,977 821,984 821,991 822,998 822,1005 822,1012 822,1019 823,1026 823,1032 823,1039 824,1045 824,1051 824,1057 824,1063 825,1068 825,1073 825,1078 825,1083 825,1088 826,1092 826,1096 826,1099 826,1102 L894,1100 894,1097 894,1093 894,1089 894,1085 893,1081 893,1076 893,1071 893,1066 893,1060 893,1054 893,1049 892,1042 892,1036 892,1030 892,1023 892,1017 891,1010 891,1003 891,996 891,989 891,982 891,975 890,968 890,961 890,954 890,947 890,940 890,933 890,926 889,919 889,913 889,908 889,902 889,896 889,890 889,884 889,878 889,872 889,866 889,860 889,853 888,847 888,841 888,834 888,828 888,822 888,815 888,809 888,803 888,796 888,790 888,784 888,777 888,771 888,765 888,759 888,753 888,746 888,740 888,734 888,729 888,723 888,717 888,711 888,706 889,700 889,694 889,687 889,681 890,675 890,668 890,662 890,656 891,650 891,643 892,637 892,631 892,625 893,619 893,613 894,607 894,601 894,595 895,589 895,584 896,578 896,572 897,566 897,561 897,555 898,549 898,544 898,538 899,532 899,527 899,521 900,514 900,507 900,500 900,493 901,486 901,479 901,472 901,466 901,459 901,452 902,446 902,439 902,433 902,427 902,421 902,415 902,410 902,404 903,399 903,394 903,389 903,385 903,381 903,370 903,361 904,354 904,348 904,343 904,338 904,335 904,332Z"/><path fill="#7ad0fa" d="M817,802 812,799 805,795 798,791 788,787 781,785 L779,791 786,793 795,797 802,801 809,805 814,808Z"/><circle fill="#7ad0fa" cx="816" cy="805" r="4"/><circle fill="#7ad0fa" cx="780" cy="788" r="3"/><path fill="#7ad0fa" d="M821,372 817,375 812,378 807,383 801,387 795,391 789,395 785,397 780,400 775,402 770,405 764,407 758,410 751,413 744,415 740,417 734,419 729,421 723,423 717,425 711,428 705,430 699,432 693,434 687,436 682,439 675,442 669,445 662,448 656,451 650,454 644,457 639,460 634,463 629,466 621,472 614,478 608,484 604,488 601,491 L618,512 622,510 626,506 632,502 639,498 646,493 650,491 655,488 660,485 665,482 671,479 677,477 682,474 688,471 694,468 699,466 705,464 710,462 716,460 722,457 728,455 734,453 739,451 745,449 751,447 756,445 763,443 769,440 776,438 782,436 788,433 794,431 800,428 806,426 813,422 821,417 828,413 834,408 839,405 842,403Z"/><circle fill="#7ad0fa" cx="832" cy="387" r="19"/><circle fill="#7ad0fa" cx="609" cy="502" r="14"/><path fill="#7ad0fa" d="M609,486 604,486 599,486 591,485 584,485 577,484 570,484 564,484 558,484 552,484 546,484 540,484 533,484 526,485 519,485 513,486 508,486 L509,497 514,496 519,496 526,495 534,495 540,495 546,495 552,494 557,494 563,495 570,495 576,495 583,496 591,496 598,497 603,498 608,498Z"/><circle fill="#7ad0fa" cx="608" cy="492" r="6"/><path fill="#7ad0fa" d="M604,495 601,497 596,501 590,506 586,510 582,514 578,518 573,522 568,527 563,532 559,536 553,540 548,544 542,548 536,552 531,556 526,559 520,564 514,568 509,571 505,573 L511,584 515,582 520,579 526,575 533,571 539,568 544,565 550,561 556,557 562,554 568,550 574,547 579,543 585,540 591,536 596,533 601,530 605,527 613,522 618,518 621,515Z"/><circle fill="#7ad0fa" cx="612" cy="505" r="13"/></g><g><path fill="#8ae6fc" d="M821,330 821,333 821,337 821,341 820,346 820,352 820,359 820,368 820,379 820,383 820,388 820,393 820,398 819,403 819,408 819,414 819,420 819,426 819,432 819,438 819,444 819,451 819,457 819,464 819,471 818,477 818,484 818,491 818,498 818,505 818,512 818,518 818,524 817,529 817,534 817,540 817,545 817,551 816,556 816,562 816,567 816,573 815,579 815,585 815,591 815,597 814,603 814,609 814,615 814,621 814,627 813,634 813,640 813,646 813,653 813,659 813,666 813,673 813,679 813,686 813,693 813,700 813,705 813,711 813,717 813,723 813,729 813,735 814,741 814,748 814,754 814,760 815,766 815,773 815,779 815,785 816,792 816,798 816,805 817,811 817,817 817,824 818,830 818,837 818,843 819,849 819,856 819,862 820,868 820,874 820,880 821,886 821,892 821,898 822,904 822,910 822,915 822,921 823,928 823,935 823,942 824,949 824,956 824,963 824,970 825,977 825,984 825,991 826,998 826,1005 826,1012 826,1019 827,1025 827,1032 827,1038 828,1045 828,1051 828,1057 828,1062 829,1068 829,1073 829,1078 829,1083 829,1087 830,1092 830,1095 830,1099 830,1102 L885,1100 885,1097 885,1094 884,1090 884,1085 884,1081 884,1076 884,1071 884,1066 884,1060 883,1055 883,1049 883,1043 883,1036 883,1030 882,1024 882,1017 882,1010 882,1003 882,996 881,989 881,982 881,975 881,968 881,961 881,954 880,947 880,940 880,933 880,926 880,919 880,914 880,908 880,902 879,896 879,890 879,884 879,878 879,872 879,866 879,860 879,854 878,847 878,841 878,835 878,828 878,822 878,816 878,809 878,803 878,797 878,790 878,784 877,778 877,771 877,765 877,759 877,753 877,747 877,741 877,735 877,729 877,723 877,717 878,711 878,706 878,700 878,694 878,687 878,681 878,674 879,668 879,662 879,655 880,649 880,643 880,637 881,631 881,625 881,618 882,612 882,606 883,601 883,595 883,589 884,583 884,577 885,571 885,566 885,560 886,554 886,549 886,543 887,537 887,532 887,526 888,521 888,514 888,507 888,500 889,493 889,486 889,479 889,472 889,465 889,459 890,452 890,446 890,439 890,433 890,427 890,421 890,415 890,409 891,404 891,399 891,394 891,389 891,385 891,381 891,370 891,361 892,353 892,347 892,342 892,338 892,335 892,332Z"/><path fill="#8ce6fc" d="M817,802 812,799 805,795 798,791 788,788 781,785 L780,790 786,792 796,796 802,800 809,804 814,807Z"/><circle fill="#8ce6fc" cx="816" cy="805" r="3"/><circle fill="#8ce6fc" cx="780" cy="788" r="2"/><path fill="#8ce6fc" d="M822,374 819,376 814,380 808,384 802,389 796,393 790,397 786,399 781,402 776,404 770,407 765,409 758,412 752,415 745,417 740,419 735,421 729,423 724,425 718,427 712,429 706,432 700,434 694,436 688,438 682,441 676,444 669,447 663,450 657,453 651,456 645,459 640,462 635,465 630,468 622,474 615,480 609,485 605,489 602,492 L615,508 618,506 623,502 629,497 635,493 643,488 647,486 652,483 657,480 662,477 668,474 674,471 680,468 686,465 692,462 697,460 702,458 708,456 714,454 720,452 726,450 732,448 737,446 743,443 749,441 754,440 761,437 767,434 773,432 780,430 786,427 791,425 797,422 802,420 810,416 817,411 824,407 830,403 835,399 838,397Z"/><circle fill="#8ce6fc" cx="830" cy="385" r="14"/><circle fill="#8ce6fc" cx="608" cy="500" r="10"/><path fill="#8ce6fc" d="M609,487 604,487 598,486 591,486 584,485 577,485 570,485 564,484 558,484 552,484 546,484 540,485 533,485 526,485 519,486 513,486 509,487 L509,495 513,494 519,494 526,493 533,493 540,493 546,492 552,492 557,492 563,492 570,493 576,493 583,494 591,494 598,495 604,495 608,496Z"/><circle fill="#8ce6fc" cx="608" cy="491" r="4"/><path fill="#8ce6fc" d="M605,496 602,499 597,502 591,508 587,511 583,515 578,519 574,524 569,528 564,532 559,536 554,541 548,545 542,549 537,553 531,557 527,560 520,564 514,568 509,571 505,574 L510,582 514,580 519,577 525,573 532,569 537,566 543,562 548,559 554,555 561,551 566,547 572,544 577,540 583,536 588,533 594,529 598,526 602,523 610,518 614,514 618,511Z"/><circle fill="#8ce6fc" cx="611" cy="504" r="10"/></g><g><path fill="#96f6ff" d="M825,330 825,333 825,337 825,341 825,346 824,352 824,359 824,368 824,379 824,383 824,388 824,393 824,398 824,403 824,408 823,414 823,420 823,426 823,432 823,438 823,444 823,451 823,457 823,464 823,471 823,477 822,484 822,491 822,498 822,505 822,512 822,519 822,524 821,529 821,534 821,540 821,545 821,551 820,556 820,562 820,568 820,573 819,579 819,585 819,591 819,597 818,603 818,609 818,615 818,621 817,627 817,634 817,640 817,647 817,653 817,660 817,666 816,673 816,679 816,686 816,693 816,700 816,705 817,711 817,717 817,723 817,729 817,735 817,741 818,747 818,754 818,760 818,766 818,773 819,779 819,785 819,792 820,798 820,804 820,811 821,817 821,824 821,830 822,836 822,843 822,849 823,855 823,862 823,868 823,874 824,880 824,886 824,892 825,898 825,904 825,910 825,915 826,921 826,928 826,935 827,941 827,948 827,956 827,963 828,970 828,977 828,984 829,991 829,998 829,1005 829,1012 830,1019 830,1025 830,1032 831,1038 831,1045 831,1051 831,1057 832,1062 832,1068 832,1073 832,1078 832,1083 833,1087 833,1091 833,1095 833,1099 833,1102 L874,1101 874,1097 874,1094 874,1090 874,1086 873,1081 873,1077 873,1072 873,1066 873,1061 872,1055 872,1049 872,1043 872,1037 872,1030 871,1024 871,1017 871,1010 871,1004 871,997 870,990 870,983 870,975 870,968 870,961 869,954 869,947 869,940 869,933 869,926 868,920 868,914 868,908 868,903 868,897 868,891 868,885 867,879 867,873 867,866 867,860 867,854 867,848 867,841 866,835 866,829 866,822 866,816 866,810 866,803 866,797 865,791 865,784 865,778 865,772 865,765 865,759 865,753 865,747 865,741 865,735 865,729 865,723 865,717 865,711 865,706 865,700 865,694 865,687 865,680 865,674 866,668 866,661 866,655 866,649 867,642 867,636 867,630 868,624 868,618 868,612 869,606 869,600 870,594 870,588 870,582 871,576 871,571 871,565 872,559 872,553 872,548 873,542 873,537 873,531 874,526 874,520 874,513 874,506 874,499 875,492 875,486 875,479 875,472 875,465 876,458 876,452 876,445 876,439 876,433 876,427 876,421 876,415 876,409 877,404 877,399 877,394 877,389 877,384 877,380 877,369 877,360 878,353 878,347 878,342 878,338 878,334 878,331Z"/><path fill="#9af4ff" d="M817,803 812,800 804,796 797,792 788,788 781,786 L780,789 787,791 796,795 803,799 810,803 815,806Z"/><circle fill="#9af4ff" cx="816" cy="804" r="2"/><circle fill="#9af4ff" cx="781" cy="787" r="2"/><path fill="#9af4ff" d="M825,377 821,380 816,384 810,388 804,392 798,396 792,400 788,403 783,405 777,408 772,410 766,413 760,415 753,418 746,421 741,423 736,425 731,427 725,429 719,431 713,433 707,435 701,437 695,439 689,442 684,444 677,447 671,450 665,453 659,456 653,459 647,462 642,465 637,468 632,471 624,476 617,482 611,487 607,492 604,495 L612,505 615,502 620,498 626,493 632,489 640,484 644,481 649,478 654,475 660,472 666,469 671,466 677,463 684,460 690,458 695,455 701,453 706,451 712,449 718,447 724,445 730,443 736,441 741,439 747,437 752,435 759,432 765,429 771,427 778,425 783,422 789,420 795,417 800,415 807,411 814,406 820,402 826,398 831,394 835,392Z"/><circle fill="#9af4ff" cx="830" cy="384" r="9"/><circle fill="#9af4ff" cx="608" cy="500" r="6"/><path fill="#9af4ff" d="M608,488 604,488 598,488 591,487 584,487 577,486 570,486 564,486 558,485 552,485 546,486 540,486 533,486 526,487 519,487 513,487 509,488 L509,493 513,493 519,492 526,492 533,491 540,491 546,491 552,491 557,491 564,491 570,491 576,491 583,492 591,492 598,493 604,493 608,494Z"/><circle fill="#9af4ff" cx="608" cy="491" r="3"/><path fill="#9af4ff" d="M607,498 604,501 599,504 592,510 589,513 585,517 580,521 575,525 570,530 565,534 560,538 555,542 549,547 543,551 538,554 532,558 528,561 521,566 515,570 510,573 506,575 L509,580 513,578 518,575 524,571 531,567 536,564 541,560 547,557 553,553 559,549 565,545 570,541 575,537 581,534 586,530 591,526 596,523 600,520 607,514 612,510 615,508Z"/><circle fill="#9af4ff" cx="611" cy="503" r="6"/></g><g><path fill="#5a94cc" d="M994,575 992,572 989,567 986,562 982,556 979,549 975,543 971,536 967,530 964,524 960,519 956,513 953,508 949,503 946,497 942,493 939,488 935,482 931,477 926,472 922,467 918,462 914,458 907,451 901,445 894,441 885,435 875,431 866,429 858,429 850,429 842,430 833,432 824,435 817,438 811,442 805,445 798,449 794,452 789,455 784,459 779,462 773,466 768,471 763,475 758,479 753,483 748,488 743,492 738,497 733,502 729,507 724,512 720,518 716,524 713,530 709,536 705,542 702,549 699,556 695,563 692,570 690,577 687,583 686,588 684,592 L724,608 726,605 728,600 730,594 733,588 736,582 739,576 742,571 745,567 749,562 752,557 756,553 760,548 764,543 767,539 771,535 774,530 778,526 782,522 786,517 789,513 793,509 797,505 802,501 806,497 811,494 815,490 820,486 824,483 830,477 834,473 837,470 840,467 845,464 849,462 854,461 858,460 862,461 865,461 869,463 874,467 877,471 881,476 886,482 888,486 892,491 895,495 899,501 903,506 907,512 910,516 914,521 917,526 921,530 925,535 928,540 932,545 935,550 938,555 941,561 945,568 948,574 951,580 954,586 957,591 958,595Z"/><circle fill="#5a94cc" cx="976" cy="585" r="20"/><circle fill="#5a94cc" cx="704" cy="600" r="22"/><path fill="#5a94cc" d="M696,537 692,538 687,538 680,539 672,540 665,541 658,543 650,546 643,548 636,551 629,553 623,556 616,559 609,561 603,563 597,565 590,567 583,569 576,572 569,574 561,577 554,579 547,581 542,583 L550,605 554,604 561,602 568,599 576,597 584,594 590,592 597,590 604,587 611,585 617,583 624,580 631,578 637,575 644,573 651,571 657,570 664,568 671,567 676,566 683,565 690,564 695,563 700,563Z"/><circle fill="#5a94cc" cx="698" cy="550" r="13"/><path fill="#5a94cc" d="M685,582 684,585 683,590 683,596 682,601 681,608 680,614 678,621 676,627 675,632 673,637 671,643 669,649 666,655 664,661 662,667 659,674 657,680 654,686 652,692 649,698 646,704 644,710 641,716 638,722 635,729 633,734 630,740 627,746 625,751 622,758 619,764 616,770 614,775 611,781 609,786 607,791 604,797 602,804 599,811 597,817 595,823 594,827 L630,843 632,840 635,835 639,829 642,823 646,816 649,809 651,804 654,798 656,793 658,788 660,782 662,776 665,769 667,764 670,759 672,753 675,747 678,741 681,735 684,728 687,722 690,715 692,708 695,702 697,696 700,690 702,683 705,677 707,670 710,664 712,657 714,651 716,645 718,639 720,631 722,623 723,615 724,608 725,602 726,596 727,592 727,588Z"/><circle fill="#5a94cc" cx="706" cy="585" r="22"/><circle fill="#5a94cc" cx="612" cy="835" r="20"/><path fill="#5a94cc" d="M693,661 696,665 699,671 703,678 707,685 710,690 712,696 715,701 718,707 721,713 724,719 728,725 731,730 734,734 738,743 741,749 L757,743 754,736 750,726 747,721 745,715 742,709 739,703 737,698 735,693 733,687 731,681 729,675 727,668 724,660 722,654 721,649Z"/><circle fill="#5a94cc" cx="707" cy="655" r="15"/><path fill="#5a94cc" d="M599,818 596,821 593,825 589,829 584,834 580,839 575,845 570,851 565,856 561,861 557,867 553,873 549,879 545,884 541,889 538,895 534,900 531,905 527,910 524,915 520,920 517,925 513,930 510,935 506,941 503,946 499,952 495,958 491,965 487,970 484,976 481,980 479,983 L505,1001 508,998 510,993 514,988 518,982 522,976 526,970 530,965 534,959 537,954 541,949 544,944 548,939 551,934 555,930 558,925 562,920 566,914 570,909 573,904 577,898 581,893 585,888 589,883 592,879 597,874 601,868 606,863 611,858 615,853 619,849 623,845 625,842Z"/><circle fill="#5a94cc" cx="612" cy="830" r="18"/><path fill="#5a94cc" d="M613,808 614,813 615,819 616,827 618,835 620,843 622,850 624,857 627,863 630,869 632,875 634,881 635,886 637,892 639,898 640,904 642,910 644,916 645,921 647,927 648,932 649,939 649,946 650,954 651,960 651,965 L681,963 681,958 680,952 680,944 679,935 678,928 677,921 676,914 674,908 673,902 672,896 670,890 669,884 667,878 666,872 664,865 663,858 661,852 659,845 658,839 656,833 655,827 654,820 653,813 652,806 651,802Z"/><circle fill="#5a94cc" cx="632" cy="805" r="19"/><path fill="#5a94cc" d="M977,552 982,554 988,557 995,561 1002,564 1008,566 1014,568 1020,570 1026,571 1033,572 1041,573 1047,574 1053,575 1060,576 1067,576 1074,577 1080,578 1087,579 1093,579 1100,579 1107,579 1113,579 1120,579 1127,579 1132,579 1137,579 1141,579 L1141,599 1137,599 1133,599 1127,599 1120,599 1114,599 1106,599 1099,599 1093,599 1086,599 1079,598 1072,598 1065,597 1058,597 1051,596 1045,595 1039,595 1030,594 1023,593 1016,592 1009,591 1002,590 994,588 985,585 978,583 971,581 967,580Z"/><circle fill="#5a94cc" cx="972" cy="566" r="15"/><path fill="#5a94cc" d="M966,582 968,587 970,593 973,599 976,605 977,611 977,615 977,620 976,625 975,631 973,638 972,644 971,651 970,657 969,664 967,671 966,678 964,684 962,690 960,697 958,704 956,710 954,715 953,719 L971,725 972,721 974,716 976,710 978,703 980,696 982,689 984,682 986,675 988,668 989,661 990,654 992,648 993,642 994,636 996,630 997,623 998,617 999,609 999,601 998,593 996,585 995,578 994,574Z"/><circle fill="#5a94cc" cx="980" cy="578" r="15"/><path fill="#5a94cc" d="M972,549 969,551 964,553 958,556 952,559 945,562 940,565 935,567 929,570 923,572 917,575 911,578 904,580 899,583 893,586 886,589 880,592 873,595 867,597 862,600 858,602 854,604 L864,624 867,623 872,621 877,618 883,615 889,612 896,609 902,607 908,604 914,602 920,599 926,596 932,594 938,592 944,590 950,588 955,586 962,583 969,580 975,578 980,576 984,575Z"/><circle fill="#5a94cc" cx="978" cy="562" r="14"/></g><g><path fill="#6cb8ee" d="M994,575 992,572 989,567 986,562 982,556 979,549 975,543 971,536 967,530 964,524 960,519 956,513 953,508 949,503 946,497 942,493 939,488 935,482 931,477 926,472 922,467 918,462 914,458 907,451 901,445 894,441 885,435 875,431 866,429 858,429 850,429 842,430 833,432 824,435 817,438 811,442 805,445 798,449 794,452 789,455 784,459 779,462 773,466 768,471 763,475 758,479 753,483 748,488 743,492 738,497 733,502 729,507 724,512 720,518 716,524 713,530 709,536 705,542 702,549 699,556 695,563 692,570 690,577 687,583 686,588 684,592 L719,606 721,603 723,598 725,592 728,586 731,579 734,574 737,568 740,564 744,559 747,554 751,549 755,544 759,540 762,535 766,530 770,526 774,522 778,517 781,513 785,509 790,505 794,501 798,497 803,493 807,489 812,485 816,482 821,479 826,473 831,469 835,466 838,463 843,460 848,458 853,457 858,456 863,457 866,457 871,460 876,464 880,468 884,473 889,479 892,483 895,488 899,492 903,498 907,503 911,509 914,513 918,518 921,523 925,528 929,532 932,537 936,542 939,548 942,553 946,559 949,565 952,572 956,578 959,584 961,589 963,592Z"/><circle fill="#6cb8ee" cx="978" cy="584" r="18"/><circle fill="#6cb8ee" cx="702" cy="599" r="19"/><path fill="#6cb8ee" d="M696,537 692,538 687,538 680,539 672,540 665,541 658,543 650,546 643,548 636,551 629,553 623,556 616,559 609,561 603,563 597,565 590,567 583,569 576,572 569,574 561,577 554,579 547,581 542,583 L549,602 553,601 560,599 568,596 575,594 583,592 590,589 596,587 603,585 610,582 616,580 623,577 630,575 636,573 643,571 650,569 656,567 663,565 670,564 676,563 683,562 689,561 695,560 699,560Z"/><circle fill="#6cb8ee" cx="698" cy="548" r="11"/><path fill="#6cb8ee" d="M685,582 684,585 683,590 683,596 682,601 681,608 680,614 678,621 676,627 675,632 673,637 671,643 669,649 666,655 664,661 662,667 659,674 657,680 654,686 652,692 649,698 646,704 644,710 641,716 638,722 635,729 633,734 630,740 627,746 625,751 622,758 619,764 616,770 614,775 611,781 609,786 607,791 604,797 602,804 599,811 597,817 595,823 594,827 L626,841 628,838 630,833 634,827 637,820 641,814 644,807 646,802 648,796 650,791 653,785 655,780 657,773 660,767 662,762 665,756 667,751 670,745 673,739 676,732 679,726 682,719 685,713 687,706 690,700 692,694 695,688 697,681 700,675 702,668 704,662 707,655 709,649 711,643 713,637 715,630 716,622 718,614 719,607 720,601 721,595 721,591 722,588Z"/><circle fill="#6cb8ee" cx="703" cy="585" r="19"/><circle fill="#6cb8ee" cx="610" cy="834" r="18"/><path fill="#6cb8ee" d="M693,661 696,665 699,671 703,678 707,685 710,690 712,696 715,701 718,707 721,713 724,719 728,725 731,730 734,734 738,743 741,749 L755,744 752,737 748,727 745,722 743,716 740,710 737,705 735,699 733,694 731,688 728,682 726,676 724,669 721,662 719,655 717,650Z"/><circle fill="#6cb8ee" cx="705" cy="656" r="13"/><path fill="#6cb8ee" d="M599,818 596,821 593,825 589,829 584,834 580,839 575,845 570,851 565,856 561,861 557,867 553,873 549,879 545,884 541,889 538,895 534,900 531,905 527,910 524,915 520,920 517,925 513,930 510,935 506,941 503,946 499,952 495,958 491,965 487,970 484,976 481,980 479,983 L502,999 504,995 507,991 511,986 514,980 518,974 523,968 527,962 530,957 534,952 537,947 541,942 544,937 548,932 551,927 555,922 558,917 562,912 566,906 570,901 573,896 577,891 581,886 585,880 589,876 593,871 598,866 603,860 607,855 612,850 616,846 619,842 622,839Z"/><circle fill="#6cb8ee" cx="610" cy="829" r="16"/><path fill="#6cb8ee" d="M613,808 614,813 615,819 616,827 618,835 620,843 622,850 624,857 627,863 630,869 632,875 634,881 635,886 637,892 639,898 640,904 642,910 644,916 645,921 647,927 648,932 649,939 649,946 650,954 651,960 651,965 L677,963 677,959 677,952 676,944 675,936 674,928 673,921 672,915 671,909 669,903 668,897 666,891 665,885 663,879 662,873 660,866 658,860 657,853 655,847 653,841 652,835 651,828 649,821 648,814 647,807 646,803Z"/><circle fill="#6cb8ee" cx="630" cy="805" r="17"/><path fill="#6cb8ee" d="M977,552 982,554 988,557 995,561 1002,564 1008,566 1014,568 1020,570 1026,571 1033,572 1041,573 1047,574 1053,575 1060,576 1067,576 1074,577 1080,578 1087,579 1093,579 1100,579 1107,579 1113,579 1120,579 1127,579 1132,579 1137,579 1141,579 L1141,596 1137,597 1133,597 1127,597 1120,597 1113,597 1106,597 1099,597 1093,596 1086,596 1079,596 1072,595 1065,595 1058,594 1051,593 1045,593 1039,592 1031,591 1023,590 1016,589 1010,588 1003,587 995,585 987,582 979,580 972,578 968,576Z"/><circle fill="#6cb8ee" cx="973" cy="564" r="13"/><path fill="#6cb8ee" d="M966,582 968,587 970,593 973,599 976,605 977,611 977,615 977,620 976,625 975,631 973,638 972,644 971,651 970,657 969,664 967,671 966,678 964,684 962,690 960,697 958,704 956,710 954,715 953,719 L969,724 970,720 972,715 974,709 976,702 978,695 980,688 982,682 984,675 985,668 987,661 988,654 989,647 990,641 992,635 993,629 995,623 996,617 996,609 996,602 994,593 993,586 992,579 991,575Z"/><circle fill="#6cb8ee" cx="978" cy="579" r="13"/><path fill="#6cb8ee" d="M972,549 969,551 964,553 958,556 952,559 945,562 940,565 935,567 929,570 923,572 917,575 911,578 904,580 899,583 893,586 886,589 880,592 873,595 867,597 862,600 858,602 854,604 L863,622 866,620 871,618 876,616 882,613 888,610 895,607 901,604 907,601 912,599 919,596 925,594 931,591 937,589 943,587 948,585 954,583 961,580 967,577 973,575 978,573 982,572Z"/><circle fill="#6cb8ee" cx="977" cy="560" r="12"/></g><g><path fill="#7ad0fa" d="M993,576 991,573 988,568 985,562 981,556 978,550 974,543 970,537 966,530 963,525 959,519 956,514 952,508 948,503 945,498 942,493 938,489 934,483 930,477 926,472 922,467 918,463 914,458 907,451 900,446 894,441 885,436 875,432 866,430 858,430 850,430 842,431 833,433 824,436 817,439 811,442 805,446 799,450 795,453 790,456 785,460 780,463 774,467 769,471 763,476 758,480 753,484 749,488 744,493 739,498 734,503 730,508 725,513 721,519 717,525 714,531 710,537 706,543 703,549 700,556 696,563 693,571 691,577 688,584 687,588 685,592 L714,604 716,601 718,596 720,590 723,583 726,577 729,571 732,566 735,561 739,556 742,550 746,545 750,541 754,536 758,531 761,526 765,522 769,517 773,513 777,509 781,505 786,501 790,497 795,493 799,489 804,485 809,481 813,478 817,474 823,469 828,465 832,462 836,459 842,456 847,454 853,453 858,452 863,453 868,454 873,456 879,461 883,465 887,470 893,476 896,480 899,485 903,489 907,495 911,500 915,506 918,510 922,515 925,520 929,525 933,530 936,535 940,540 943,545 946,551 950,557 953,563 957,570 960,576 963,581 965,586 967,590Z"/><circle fill="#7ad0fa" cx="980" cy="583" r="14"/><circle fill="#7ad0fa" cx="700" cy="598" r="16"/><path fill="#7ad0fa" d="M697,538 693,538 687,539 680,540 672,541 666,542 658,544 650,546 643,549 636,551 629,554 623,556 616,559 609,562 603,564 597,566 590,568 583,570 576,572 569,575 561,577 554,580 547,582 543,584 L548,599 552,598 559,596 567,594 575,591 582,589 589,586 595,584 602,582 609,580 615,577 622,575 629,572 635,570 642,568 649,566 656,564 662,562 669,560 675,559 682,558 689,558 695,557 699,556Z"/><circle fill="#7ad0fa" cx="698" cy="547" r="9"/><path fill="#7ad0fa" d="M686,582 685,586 685,590 684,596 683,602 682,608 681,614 679,621 677,627 676,632 674,638 672,643 670,649 668,655 665,662 663,668 660,674 658,680 655,686 653,692 650,698 647,704 645,711 642,717 639,723 636,729 634,735 631,741 628,746 626,752 623,758 620,765 617,771 615,776 612,781 610,786 608,791 605,798 603,805 600,811 598,818 596,823 595,827 L621,839 623,836 626,831 629,825 632,818 635,811 639,805 641,799 643,794 645,789 647,783 650,777 652,771 655,764 657,759 660,754 662,748 665,742 668,736 671,730 674,724 677,717 679,711 682,704 685,698 687,692 690,686 692,679 695,673 697,666 699,660 702,654 704,648 706,642 707,636 709,628 711,621 713,613 714,606 715,600 715,595 716,590 717,587Z"/><circle fill="#7ad0fa" cx="701" cy="584" r="16"/><circle fill="#7ad0fa" cx="608" cy="833" r="14"/><path fill="#7ad0fa" d="M694,661 696,665 700,671 704,678 708,685 710,690 713,695 716,701 718,707 721,712 725,719 728,724 732,729 734,734 739,743 742,749 L753,744 750,738 746,728 743,723 741,717 738,712 735,706 733,701 730,695 728,689 726,683 724,678 721,670 718,663 716,657 714,652Z"/><circle fill="#7ad0fa" cx="704" cy="656" r="11"/><path fill="#7ad0fa" d="M599,819 597,821 593,825 589,830 585,835 580,840 575,846 571,851 566,857 562,862 557,868 553,873 549,879 546,885 542,890 538,895 535,901 531,906 528,911 525,916 521,921 518,926 514,931 511,936 507,941 503,947 499,953 495,959 491,965 488,971 484,976 481,980 479,984 L499,996 501,993 504,989 507,984 511,978 515,972 519,966 523,960 527,955 530,950 534,945 537,940 541,935 544,930 548,925 551,920 555,915 559,909 563,904 566,899 570,893 574,888 578,883 582,877 586,873 590,868 595,863 599,857 604,852 609,847 613,843 616,839 619,836Z"/><circle fill="#7ad0fa" cx="609" cy="827" r="13"/><path fill="#7ad0fa" d="M614,808 615,812 616,819 617,826 619,835 620,842 623,850 625,856 628,863 630,869 633,875 634,880 636,886 638,892 640,898 641,904 643,910 645,916 646,921 647,927 648,932 649,939 650,946 651,954 651,960 652,965 L673,963 673,959 673,952 672,944 672,936 671,929 670,922 668,916 667,910 665,904 664,898 662,892 661,886 659,880 658,874 656,868 654,861 652,855 651,848 649,842 647,836 646,829 644,822 643,814 642,808 641,803Z"/><circle fill="#7ad0fa" cx="628" cy="806" r="14"/><path fill="#7ad0fa" d="M977,553 982,555 988,558 994,561 1001,565 1008,567 1014,569 1020,570 1026,571 1033,572 1041,574 1047,574 1053,575 1060,576 1067,577 1074,578 1080,578 1087,579 1093,580 1100,580 1107,580 1113,580 1120,580 1127,580 1132,580 1137,580 1141,580 L1141,594 1137,594 1133,594 1127,594 1120,594 1113,594 1106,594 1099,594 1093,594 1086,594 1079,593 1072,593 1065,592 1058,591 1052,591 1045,590 1039,589 1031,588 1024,588 1017,587 1010,585 1003,584 996,582 988,579 980,577 974,575 969,573Z"/><circle fill="#7ad0fa" cx="973" cy="563" r="11"/><path fill="#7ad0fa" d="M966,582 968,586 971,592 974,599 976,605 978,611 978,615 977,620 976,625 975,631 974,638 973,644 972,651 970,658 969,664 968,671 966,678 965,684 963,690 961,697 958,704 956,710 955,715 953,719 L967,723 968,720 969,714 971,708 974,701 976,694 978,688 980,681 981,674 983,667 984,660 986,653 987,647 988,641 989,635 991,629 992,623 993,616 993,610 993,602 991,594 990,587 988,580 987,576Z"/><circle fill="#7ad0fa" cx="977" cy="579" r="11"/><path fill="#7ad0fa" d="M973,550 969,552 964,554 959,557 952,560 945,563 940,565 935,568 930,570 924,573 917,575 911,578 905,581 899,583 893,586 887,589 880,592 874,595 868,598 862,600 858,603 854,604 L861,619 865,618 869,616 875,613 881,610 887,607 894,604 900,601 906,599 911,596 918,594 924,591 930,589 936,586 942,584 947,582 952,580 959,577 966,574 972,572 977,570 981,568Z"/><circle fill="#7ad0fa" cx="977" cy="559" r="10"/></g><g><path fill="#8ce6fc" d="M991,577 989,573 987,569 983,563 980,557 976,550 972,544 969,537 965,531 961,526 958,520 954,515 951,509 947,504 943,499 940,494 937,490 933,484 928,479 924,473 920,468 916,464 912,459 906,453 899,447 893,442 884,437 874,433 866,431 858,431 850,431 842,432 834,434 825,437 818,440 812,444 806,447 800,452 796,454 791,458 786,461 781,465 775,469 770,473 765,477 760,481 755,486 750,490 745,495 740,499 736,504 731,509 727,515 723,520 719,526 715,532 712,538 708,544 705,550 701,557 698,564 695,571 693,578 690,584 688,589 687,593 L708,602 710,598 712,593 715,587 717,581 720,574 723,568 726,562 730,557 733,552 737,547 741,541 744,536 748,531 752,527 756,522 760,517 764,513 768,508 773,504 777,500 781,496 786,492 791,488 796,484 800,480 805,476 810,473 814,470 820,465 825,461 829,457 834,455 840,452 846,450 852,448 858,448 864,448 869,449 875,452 882,457 886,461 891,466 897,473 900,477 904,481 907,486 911,491 915,497 919,503 923,507 926,512 930,517 933,522 937,527 941,532 944,537 947,542 951,548 954,554 958,561 961,567 965,573 968,579 970,584 972,587Z"/><circle fill="#8ce6fc" cx="982" cy="582" r="11"/><circle fill="#8ce6fc" cx="698" cy="597" r="12"/><path fill="#8ce6fc" d="M697,539 693,539 687,540 680,541 673,542 666,543 658,545 651,547 644,550 637,552 630,555 623,557 617,560 610,563 604,565 597,567 590,569 584,571 577,573 570,576 562,578 554,581 548,583 543,585 L547,596 551,595 558,593 566,590 574,588 581,586 588,583 594,581 601,579 608,577 614,574 621,572 628,569 634,567 641,565 648,562 655,560 662,558 669,557 675,556 682,555 688,554 694,553 698,553Z"/><circle fill="#8ce6fc" cx="698" cy="546" r="7"/><path fill="#8ce6fc" d="M688,582 687,586 686,591 686,596 685,602 684,608 683,615 681,621 679,628 678,633 676,638 674,644 672,650 669,656 667,662 664,669 662,675 659,681 657,687 655,693 652,699 649,705 646,711 644,718 641,724 638,730 635,736 633,742 630,747 628,752 625,759 622,766 619,771 617,777 614,782 612,787 610,792 607,799 605,805 602,812 600,819 598,824 596,828 L616,837 618,833 620,828 623,822 626,815 630,809 633,802 635,797 637,791 639,786 642,781 644,775 647,769 649,762 652,757 654,751 657,746 660,740 662,734 665,727 668,721 671,715 674,708 676,702 679,696 681,690 684,683 686,677 689,671 691,664 694,658 696,652 698,646 700,640 702,634 704,627 705,620 707,612 708,606 709,599 709,594 710,589 711,586Z"/><circle fill="#8ce6fc" cx="699" cy="584" r="12"/><circle fill="#8ce6fc" cx="606" cy="832" r="11"/><path fill="#8ce6fc" d="M695,660 698,664 701,670 705,677 709,684 711,689 714,695 716,701 719,706 722,712 725,718 729,724 732,729 735,733 739,742 742,749 L751,745 748,739 744,729 741,724 738,719 735,713 732,707 730,702 727,696 725,690 723,685 720,679 717,672 714,665 712,658 710,654Z"/><circle fill="#8ce6fc" cx="703" cy="657" r="8"/><path fill="#8ce6fc" d="M600,820 598,823 595,826 591,831 586,836 581,841 577,847 572,852 567,858 563,863 559,869 554,874 551,880 547,885 543,891 540,896 536,902 533,906 529,911 526,916 522,921 519,927 515,932 512,937 508,942 505,948 501,954 497,960 493,966 489,972 485,977 483,981 481,984 L495,994 497,991 500,986 503,981 507,975 511,969 515,963 519,957 523,952 527,947 530,942 534,937 537,932 541,927 544,922 548,917 551,912 555,907 559,901 562,896 566,891 570,885 574,880 578,874 582,870 586,865 591,859 596,854 600,849 605,844 609,839 612,835 615,833Z"/><circle fill="#8ce6fc" cx="608" cy="826" r="10"/><path fill="#8ce6fc" d="M616,808 617,812 618,819 619,826 620,834 622,842 624,849 627,856 629,862 632,868 634,874 636,880 638,886 639,892 641,897 643,903 644,909 646,915 647,921 649,926 650,932 651,939 652,946 652,954 653,960 653,965 L669,964 669,959 669,952 668,945 667,937 666,929 665,923 664,917 662,911 661,905 659,899 658,893 656,887 655,881 653,875 652,869 650,863 648,856 646,850 644,843 642,837 641,830 639,823 638,815 637,809 636,804Z"/><circle fill="#8ce6fc" cx="626" cy="806" r="10"/><path fill="#8ce6fc" d="M977,554 981,556 987,559 994,562 1001,566 1008,568 1014,570 1020,571 1026,572 1033,573 1041,575 1047,575 1053,576 1060,577 1067,578 1073,579 1080,579 1087,580 1093,580 1100,581 1107,581 1113,581 1120,581 1127,581 1132,581 1137,580 1141,580 L1141,591 1137,591 1133,591 1127,591 1120,591 1113,592 1106,592 1100,591 1093,591 1086,591 1080,590 1072,590 1065,589 1059,588 1052,588 1046,587 1040,586 1031,585 1024,584 1018,583 1011,582 1004,581 997,578 989,576 982,573 975,571 971,569Z"/><circle fill="#8ce6fc" cx="974" cy="562" r="8"/><path fill="#8ce6fc" d="M968,582 969,586 972,592 975,599 977,605 979,611 979,615 978,620 977,625 976,631 975,638 974,645 972,651 971,658 970,664 969,671 967,678 965,684 963,691 961,698 959,704 957,710 955,716 954,720 L964,723 965,719 967,714 969,707 971,701 973,694 975,687 977,681 979,674 980,667 982,660 983,653 984,646 985,640 987,634 988,628 989,622 990,616 990,610 990,603 988,595 986,588 984,581 983,577Z"/><circle fill="#8ce6fc" cx="975" cy="579" r="8"/><path fill="#8ce6fc" d="M973,551 970,553 965,555 959,558 953,561 946,564 941,566 936,569 930,571 924,574 918,576 912,579 905,582 900,584 893,587 887,590 881,593 874,596 868,599 863,601 858,603 855,605 L860,616 863,615 868,613 873,610 879,607 886,604 892,601 899,598 905,596 910,593 916,591 923,588 929,585 935,583 941,581 946,579 951,577 958,574 965,571 971,568 976,566 979,565Z"/><circle fill="#8ce6fc" cx="976" cy="558" r="8"/></g><g><path fill="#9af4ff" d="M988,578 986,575 984,570 981,565 977,559 974,552 970,545 966,539 962,533 959,527 955,522 952,516 948,511 944,506 941,501 938,496 934,492 930,486 926,480 922,475 918,470 914,466 910,461 903,455 897,449 891,445 883,439 873,435 866,434 858,433 851,434 843,435 835,437 826,440 820,443 814,446 808,450 802,454 798,457 793,460 788,464 783,468 778,472 772,476 767,480 762,484 758,488 753,493 748,497 743,502 739,507 735,512 730,517 726,523 722,528 719,534 715,540 711,546 708,552 705,559 701,566 699,573 696,580 693,586 692,591 690,594 L704,600 705,596 707,591 710,585 712,579 715,572 718,566 722,560 725,554 728,549 732,543 736,538 740,533 744,528 748,523 752,518 756,513 760,509 764,504 769,500 773,496 778,492 782,488 787,484 792,480 797,476 802,472 807,469 811,466 817,461 822,457 827,454 832,451 839,448 845,446 852,445 858,444 864,445 870,446 877,449 884,454 889,458 894,463 900,470 904,474 907,478 911,483 915,489 919,494 923,500 927,504 930,509 934,514 937,519 941,524 944,529 948,534 951,540 955,546 958,552 962,558 966,565 969,571 972,577 974,581 976,585Z"/><circle fill="#9af4ff" cx="982" cy="582" r="7"/><circle fill="#9af4ff" cx="697" cy="597" r="7"/><path fill="#9af4ff" d="M697,541 693,541 687,542 680,543 673,544 666,545 659,547 651,549 644,552 637,554 630,557 624,559 617,562 610,564 604,566 598,569 591,571 584,573 577,575 570,577 562,580 555,583 548,585 544,586 L546,594 551,592 557,590 565,588 573,585 580,583 587,581 593,578 600,576 607,574 613,572 620,569 627,567 633,564 640,562 647,560 654,557 661,555 668,554 674,553 681,552 688,551 694,550 698,550Z"/><circle fill="#9af4ff" cx="697" cy="545" r="4"/><path fill="#9af4ff" d="M691,583 691,586 690,591 689,596 688,602 687,609 686,615 684,622 683,629 681,634 679,639 677,645 675,651 673,657 670,663 668,670 665,676 663,682 660,688 658,694 655,700 652,707 650,713 647,719 644,725 641,731 638,737 636,743 633,749 631,754 628,761 625,767 622,773 620,778 618,783 615,788 613,794 611,800 608,807 605,814 603,820 601,825 599,829 L612,835 613,831 616,826 619,820 622,813 625,806 628,800 630,795 632,789 634,784 637,779 639,773 642,767 645,760 647,755 649,749 652,744 655,738 658,732 660,725 663,719 666,713 669,706 672,700 674,694 676,688 679,682 682,675 684,669 686,662 689,656 691,650 693,644 695,638 697,633 699,626 700,618 702,611 703,605 704,599 704,593 705,589 706,585Z"/><circle fill="#9af4ff" cx="698" cy="584" r="7"/><circle fill="#9af4ff" cx="605" cy="832" r="7"/><path fill="#9af4ff" d="M697,659 700,664 703,670 707,677 710,683 713,689 715,694 718,700 721,706 723,711 727,717 730,723 734,728 736,733 741,742 744,748 L749,746 746,739 742,730 739,725 736,720 733,714 730,708 727,703 725,697 723,691 720,686 718,680 715,673 712,666 709,660 707,655Z"/><circle fill="#9af4ff" cx="702" cy="657" r="5"/><path fill="#9af4ff" d="M603,822 600,824 597,828 593,833 588,838 584,843 579,849 574,854 569,859 565,864 561,870 557,876 553,882 549,887 546,892 542,898 538,903 535,908 531,913 528,918 524,923 521,928 517,933 514,938 510,943 507,949 503,955 499,961 495,967 491,973 488,978 485,983 483,986 L492,992 494,989 497,984 500,979 504,973 508,967 512,961 516,955 520,950 523,945 527,940 530,935 534,930 537,925 541,920 544,915 548,910 552,904 555,899 559,894 562,888 566,883 570,877 575,872 579,867 583,862 588,857 593,851 597,846 602,841 606,836 609,833 612,830Z"/><circle fill="#9af4ff" cx="607" cy="826" r="6"/><path fill="#9af4ff" d="M619,807 620,812 621,818 622,826 623,834 625,841 627,848 630,855 632,861 634,867 637,873 638,879 640,885 642,891 644,897 645,903 647,909 648,915 650,920 651,926 652,932 653,938 654,946 655,953 655,960 656,965 L666,964 665,959 665,953 664,945 664,937 663,930 662,924 660,918 659,912 657,906 656,900 654,894 653,888 651,882 649,876 648,870 646,864 644,858 641,851 639,845 638,838 636,831 635,823 633,816 632,810 632,805Z"/><circle fill="#9af4ff" cx="625" cy="806" r="6"/><path fill="#9af4ff" d="M976,556 980,558 986,561 993,564 1000,567 1007,570 1013,572 1019,573 1026,574 1033,575 1041,576 1047,577 1053,578 1060,579 1066,580 1073,580 1080,581 1087,582 1093,582 1100,582 1107,582 1113,582 1120,582 1127,582 1132,582 1137,582 1141,582 L1141,589 1137,589 1132,589 1127,589 1120,589 1113,589 1106,589 1100,589 1093,589 1087,588 1080,588 1073,587 1066,587 1059,586 1052,585 1046,584 1040,584 1032,583 1025,582 1018,581 1012,579 1005,578 998,576 990,573 983,570 977,567 972,566Z"/><circle fill="#9af4ff" cx="974" cy="561" r="5"/><path fill="#9af4ff" d="M970,581 972,585 974,591 977,598 979,605 980,610 980,615 980,620 979,626 977,632 976,639 975,645 974,651 973,658 972,665 970,672 969,678 967,684 965,691 963,698 961,705 959,711 957,716 956,720 L962,722 963,718 965,713 967,707 969,700 971,693 973,686 975,680 976,673 978,666 979,659 981,652 982,646 983,640 984,633 986,627 987,622 988,616 988,610 987,603 985,596 983,589 981,582 980,578Z"/><circle fill="#9af4ff" cx="975" cy="580" r="5"/><path fill="#9af4ff" d="M974,553 971,555 966,557 960,560 953,563 947,566 942,568 936,570 931,573 925,575 919,578 912,581 906,584 900,586 894,589 888,592 881,595 875,598 869,601 864,603 859,605 856,607 L859,614 862,612 867,610 872,608 878,605 885,602 891,599 897,596 903,593 909,591 915,588 922,585 928,583 934,580 939,578 945,576 950,574 957,571 963,568 969,565 974,563 978,562Z"/><circle fill="#9af4ff" cx="976" cy="557" r="5"/></g><ellipse cx="509.0" cy="580.0" rx="8.5" ry="3.2" transform="rotate(-120.1 509.0 580.0)" fill="#a8f6ff" stroke="#2c4c70" stroke-width="1.3"/><ellipse cx="546.0" cy="594.0" rx="11.5" ry="4.4" transform="rotate(-107.9 546.0 594.0)" fill="#a8f6ff" stroke="#2c4c70" stroke-width="1.3"/><ellipse cx="749.0" cy="746.0" rx="8.5" ry="3.2" transform="rotate(157.5 749.0 746.0)" fill="#a8f6ff" stroke="#2c4c70" stroke-width="1.3"/><ellipse cx="666.0" cy="964.0" rx="15.0" ry="5.7" transform="rotate(175.8 666.0 964.0)" fill="#a8f6ff" stroke="#2c4c70" stroke-width="1.3"/><ellipse cx="1141.0" cy="589.0" rx="10.0" ry="3.8" transform="rotate(-90.5 1141.0 589.0)" fill="#a8f6ff" stroke="#2c4c70" stroke-width="1.3"/><ellipse cx="962.0" cy="722.0" rx="9.5" ry="3.6" transform="rotate(-162.3 962.0 722.0)" fill="#a8f6ff" stroke="#2c4c70" stroke-width="1.3"/><ellipse cx="424.0" cy="892.0" rx="9.5" ry="3.6" transform="rotate(-177.7 424.0 892.0)" fill="#a8f6ff" stroke="#2c4c70" stroke-width="1.3"/><path d="M478.7,983.2L505.3,1000.8" stroke="#2c4c70" stroke-width="1.6"/><path d="M854.2,603.6L863.8,624.4" stroke="#2c4c70" stroke-width="1.6"/><path d="M910,517 907,512 903,507 899,501 895,496 892,491 888,487 886,483 881,476 877,472 874,468 869,464 865,462 862,461 858,461 854,461 849,463 845,465 840,468 837,470 834,473 830,478 824,483 820,487 815,490 811,494 806,498" fill="none" stroke="#22405e" stroke-width="1.8"/><ellipse cx="864" cy="794" rx="6" ry="3.5" transform="rotate(30 864 794)" fill="#4c86c0"/><ellipse cx="866" cy="796" rx="3" ry="2" fill="#2a4a70"/><path d="M778,788 L784,786" stroke="#2c4c70" stroke-width="1.2"/><g fill="#e6ffff" fill-opacity="0.75"><path d="M770,413 L782,404 L792,404 L791,414 L778,417z"/><path d="M689,550 L700,545 L715,546 L706,554 L692,555z"/><path d="M973,567 L986,563 L1019,578 L1017,587 L1000,584z"/><path d="M995,592 L1003,590 L1006,606 L998,610z"/></g></g></defs><use href="#veinsym"/></svg>
<svg class="a" style="left:1216px;top:922px" width="42" height="42"><circle cx="21" cy="20" r="17" fill="none" stroke="#f6f6f6" stroke-width="1.3"/><circle cx="21" cy="20" r="8" fill="none" stroke="#cfcfcf" stroke-width="1"/></svg>
<div class="a" style="left:1366px;top:428px;width:2px;height:2px;background:#d02020"></div>
<div class="a" style="left:135px;top:1333px;width:1314px;height:1px;background:#fafafa"></div>
<div class="a" style="left:128px;top:1341px;width:1328px;height:9px;background:#141414"></div>
<svg class="a" style="left:720px;top:1343px" width="144" height="7"><defs><pattern id="dt2" width="2" height="2" patternUnits="userSpaceOnUse"><rect width="1" height="1" fill="#3a3a3a"/><rect x="1" y="1" width="1" height="1" fill="#3a3a3a"/></pattern></defs><rect x="0" y="0" width="56" height="7" fill="url(#dt2)"/><rect x="87" y="0" width="57" height="7" fill="url(#dt2)"/><path d="M62 7l6-6 6 6z" fill="#606060"/><path d="M72 1h12l-6 6z" fill="#606060"/></svg>
<div class="a bt" style="left:21px;top:99px;width:100px;height:48px;"></div>
<div class="a t" style="left:36.0px;top:111.5px;font-size:12.5px;font-weight:bold;color:#b2b2b2;letter-spacing:0.76px;">Projection</div>
<div class="a t" style="left:36.0px;top:125.2px;font-size:12.5px;font-weight:bold;color:#b2b2b2;letter-spacing:0.94px;">Master</div>
<svg class="a" style="left:99px;top:128px" width="11" height="10"><path d="M10 0V10H0z" fill="#6a6a6a"/></svg>
<div class="a bt" style="left:124px;top:99px;width:101px;height:48px;"></div>
<div class="a t" style="left:128.0px;top:116.5px;font-size:12.5px;font-weight:bold;color:#b2b2b2;letter-spacing:0.26px;">LightBox</div>
<div class="a bt" style="left:228px;top:99px;width:100px;height:48px;"></div>
<svg class="a" style="left:238px;top:109px" width="24" height="30"><rect x="0.5" y="0.5" width="23" height="29" fill="#3a3a3a" stroke="#555"/><path d="M5 10l12 9 2-1-12-10z" fill="#777"/></svg>
<div class="a t" style="left:266.0px;top:109.5px;font-size:12.5px;font-weight:bold;color:#b2b2b2;letter-spacing:0.32px;">Quick</div>
<div class="a t" style="left:270.0px;top:121.5px;font-size:12.5px;font-weight:bold;color:#b2b2b2;letter-spacing:0.80px;">Sketch</div>
<div class="a gb" style="left:331px;top:99px;width:49px;height:48px;"></div>
<svg class="a" style="left:342px;top:108px" width="24" height="20" viewBox="0 0 24 20"><g fill="#000"><rect x="2" y="1" width="4" height="4"/><rect x="2" y="14" width="4" height="4"/><rect x="15" y="14" width="4" height="4"/><rect x="19" y="1" width="3.5" height="3.5" fill="#3a5a10"/></g><path d="M6 3h13M4 5v9M6 16h9M17 14l4-10" stroke="#000" stroke-width="1.6"/></svg>
<div class="a t" style="left:342.0px;top:128.1px;font-size:12.0px;font-weight:normal;color:#000;letter-spacing:-0.56px;">Edit</div>
<div class="a gb" style="left:383px;top:99px;width:49px;height:48px;"></div>
<svg class="a" style="left:396px;top:109px" width="20" height="18"><path d="M10 0v6M10 8v2M10 12v6M0 9h7M13 9h7" stroke="#000" stroke-width="2"/></svg>
<div class="a t" style="left:394.0px;top:128.1px;font-size:12.0px;font-weight:normal;color:#000;letter-spacing:-1.00px;">Draw</div>
<svg class="a" style="left:446px;top:106px" width="32" height="24" viewBox="0 0 32 24"><rect x="4" y="9" width="13" height="13" fill="#4a4a4a" stroke="#666"/><rect x="10" y="1" width="18" height="16" fill="#8a8a8a"/><text x="19" y="14.5" font-family="Liberation Sans" font-weight="bold" font-size="14" fill="#1e1e1e" text-anchor="middle">M</text></svg>
<svg class="a" style="left:497px;top:106px" width="32" height="24" viewBox="0 0 32 24"><rect x="4" y="9" width="13" height="13" fill="#4a4a4a" stroke="#666"/><rect x="10" y="1" width="18" height="16" fill="#8a8a8a"/><text x="19" y="14.5" font-family="Liberation Sans" font-weight="bold" font-size="14" fill="#1e1e1e" text-anchor="middle">S</text></svg>
<svg class="a" style="left:548px;top:106px" width="32" height="24" viewBox="0 0 32 24"><rect x="4" y="9" width="13" height="13" fill="#4a4a4a" stroke="#666"/><rect x="10" y="1" width="18" height="16" fill="#8a8a8a"/><text x="19" y="14.5" font-family="Liberation Sans" font-weight="bold" font-size="14" fill="#1e1e1e" text-anchor="middle">R</text></svg>
<div class="a t" style="left:442.0px;top:128.1px;font-size:12.0px;font-weight:normal;color:#8e8e8e;letter-spacing:-0.78px;">Move</div>
<div class="a t" style="left:494.5px;top:128.1px;font-size:12.0px;font-weight:normal;color:#8e8e8e;letter-spacing:-1.00px;">Scale</div>
<div class="a t" style="left:546.0px;top:128.1px;font-size:12.0px;font-weight:normal;color:#8e8e8e;letter-spacing:-0.47px;">Rotate</div>
<div class="a mn" style="left:590px;top:99px;width:65px;height:22px;"></div>
<div class="a t" style="left:593.0px;top:104.1px;font-size:12.0px;font-weight:bold;color:#a8a8a8;letter-spacing:0.89px;">Mrgb</div>
<div class="a gb" style="left:657px;top:99px;width:65px;height:23px;"></div>
<div class="a t" style="left:660.0px;top:104.0px;font-size:12.5px;font-weight:bold;color:#000;letter-spacing:-0.15px;">Rgb</div>
<div class="a mn" style="left:726px;top:99px;width:66px;height:22px;"></div>
<div class="a t" style="left:729.0px;top:104.1px;font-size:12.0px;font-weight:bold;color:#8a8a8a;">M</div>
<div class="a gb" style="left:797px;top:99px;width:66px;height:23px;"></div>
<div class="a t" style="left:800.0px;top:104.0px;font-size:12.5px;font-weight:bold;color:#000;letter-spacing:0.05px;">Zadd</div>
<div class="a mn" style="left:863px;top:99px;width:66px;height:22px;"></div>
<div class="a t" style="left:866.0px;top:104.1px;font-size:12.0px;font-weight:bold;color:#a8a8a8;letter-spacing:0.78px;">Zsub</div>
<div class="a t" style="left:935.0px;top:104.1px;font-size:12.0px;font-weight:bold;color:#3e3e3e;letter-spacing:1.22px;">Zcut</div>
<div class="a t" style="left:593.0px;top:125.2px;font-size:12.5px;font-weight:bold;color:#b2b2b2;letter-spacing:1.00px;">Rgb Intensity 100</div>
<div class="a t" style="left:814.0px;top:125.2px;font-size:12.5px;font-weight:bold;color:#b2b2b2;letter-spacing:1.01px;">Z Intensity 25</div>
<div class="a " style="left:590px;top:142px;width:202px;height:2px;background:linear-gradient(90deg,#1d1d1d,#3a3a3a 50%,#1d1d1d)"></div>
<div class="a " style="left:777px;top:140px;width:17px;height:7px;background:#3f90ee;border-radius:3px"></div>
<div class="a " style="left:800px;top:142px;width:200px;height:2px;background:linear-gradient(90deg,#1d1d1d,#3a3a3a 50%,#1d1d1d)"></div>
<div class="a " style="left:889px;top:140px;width:17px;height:7px;background:#3f90ee;border-radius:3px"></div>
<div class="a t" style="left:1007.0px;top:99.1px;font-size:12.5px;font-weight:bold;color:#b2b2b2;letter-spacing:0.72px;">Focal Shift 0</div>
<div class="a " style="left:1000px;top:116px;width:205px;height:2px;background:linear-gradient(90deg,#1d1d1d,#3a3a3a 50%,#1d1d1d)"></div>
<div class="a " style="left:1098px;top:114px;width:17px;height:7px;background:#3f90ee;border-radius:3px"></div>
<div class="a t" style="left:1007.0px;top:125.0px;font-size:12.5px;font-weight:bold;color:#b2b2b2;letter-spacing:0.87px;">Draw Size 64</div>
<div class="a " style="left:1000px;top:142px;width:205px;height:2px;background:linear-gradient(90deg,#1d1d1d,#3a3a3a 50%,#1d1d1d)"></div>
<div class="a " style="left:1051px;top:140px;width:17px;height:7px;background:#3f90ee;border-radius:3px"></div>
<div class="a t" style="left:1164.0px;top:124.9px;font-size:9.5px;font-weight:bold;color:#9a9a9a;letter-spacing:0.40px;">Dynamic</div>
<div class="a t" style="left:1215.5px;top:103.5px;font-size:12.5px;font-weight:bold;color:#b2b2b2;letter-spacing:0.61px;">ActivePoints: 14,211</div>
<div class="a t" style="left:1215.5px;top:129.5px;font-size:12.5px;font-weight:bold;color:#b2b2b2;letter-spacing:0.67px;">TotalPoints: 57.837 Mil</div>
<div class="a t" style="left:132.0px;top:164.5px;font-size:12.5px;font-weight:bold;color:#4b8ce6;letter-spacing:0.63px;">Camera</div>
<div class="a dk" style="left:236px;top:154px;width:1184px;height:11px;"></div>
<div class="a dk" style="left:236px;top:169px;width:1184px;height:22px;"></div>
<div class="a " style="left:1428px;top:169px;width:23px;height:22px;border:1px solid #3a3a3a;border-radius:4px;background:#151515"></div>
<svg class="a" style="left:236px;top:0px" width="1184" height="200"><rect x="0.0" y="170" width="1.6" height="20" fill="#666"/><rect x="11.8" y="176" width="1.4" height="7" fill="#4a4a4a"/><rect x="23.7" y="176" width="1.4" height="7" fill="#4a4a4a"/><rect x="35.5" y="176" width="1.4" height="7" fill="#4a4a4a"/><rect x="47.4" y="176" width="1.4" height="7" fill="#4a4a4a"/><rect x="59.2" y="170" width="1.6" height="20" fill="#666"/><rect x="71.0" y="176" width="1.4" height="7" fill="#4a4a4a"/><rect x="82.9" y="176" width="1.4" height="7" fill="#4a4a4a"/><rect x="94.7" y="176" width="1.4" height="7" fill="#4a4a4a"/><rect x="106.6" y="176" width="1.4" height="7" fill="#4a4a4a"/><rect x="118.4" y="170" width="1.6" height="20" fill="#666"/><rect x="130.2" y="176" width="1.4" height="7" fill="#4a4a4a"/><rect x="142.1" y="176" width="1.4" height="7" fill="#4a4a4a"/><rect x="153.9" y="176" width="1.4" height="7" fill="#4a4a4a"/><rect x="165.8" y="176" width="1.4" height="7" fill="#4a4a4a"/><rect x="177.6" y="170" width="1.6" height="20" fill="#666"/><rect x="189.4" y="176" width="1.4" height="7" fill="#4a4a4a"/><rect x="201.3" y="176" width="1.4" height="7" fill="#4a4a4a"/><rect x="213.1" y="176" width="1.4" height="7" fill="#4a4a4a"/><rect x="225.0" y="176" width="1.4" height="7" fill="#4a4a4a"/><rect x="236.8" y="170" width="1.6" height="20" fill="#666"/><rect x="248.6" y="176" width="1.4" height="7" fill="#4a4a4a"/><rect x="260.5" y="176" width="1.4" height="7" fill="#4a4a4a"/><rect x="272.3" y="176" width="1.4" height="7" fill="#4a4a4a"/><rect x="284.2" y="176" width="1.4" height="7" fill="#4a4a4a"/><rect x="296.0" y="170" width="1.6" height="20" fill="#666"/><rect x="307.8" y="176" width="1.4" height="7" fill="#4a4a4a"/><rect x="319.7" y="176" width="1.4" height="7" fill="#4a4a4a"/><rect x="331.5" y="176" width="1.4" height="7" fill="#4a4a4a"/><rect x="343.4" y="176" width="1.4" height="7" fill="#4a4a4a"/><rect x="355.2" y="170" width="1.6" height="20" fill="#666"/><rect x="367.0" y="176" width="1.4" height="7" fill="#4a4a4a"/><rect x="378.9" y="176" width="1.4" height="7" fill="#4a4a4a"/><rect x="390.7" y="176" width="1.4" height="7" fill="#4a4a4a"/><rect x="402.6" y="176" width="1.4" height="7" fill="#4a4a4a"/><rect x="414.4" y="170" width="1.6" height="20" fill="#666"/><rect x="426.2" y="176" width="1.4" height="7" fill="#4a4a4a"/><rect x="438.1" y="176" width="1.4" height="7" fill="#4a4a4a"/><rect x="449.9" y="176" width="1.4" height="7" fill="#4a4a4a"/><rect x="461.8" y="176" width="1.4" height="7" fill="#4a4a4a"/><rect x="473.6" y="170" width="1.6" height="20" fill="#666"/><rect x="485.4" y="176" width="1.4" height="7" fill="#4a4a4a"/><rect x="497.3" y="176" width="1.4" height="7" fill="#4a4a4a"/><rect x="509.1" y="176" width="1.4" height="7" fill="#4a4a4a"/><rect x="521.0" y="176" width="1.4" height="7" fill="#4a4a4a"/><rect x="532.8" y="170" width="1.6" height="20" fill="#666"/><rect x="544.6" y="176" width="1.4" height="7" fill="#4a4a4a"/><rect x="556.5" y="176" width="1.4" height="7" fill="#4a4a4a"/><rect x="568.3" y="176" width="1.4" height="7" fill="#4a4a4a"/><rect x="580.2" y="176" width="1.4" height="7" fill="#4a4a4a"/><rect x="592.0" y="170" width="1.6" height="20" fill="#666"/><rect x="603.8" y="176" width="1.4" height="7" fill="#4a4a4a"/><rect x="615.7" y="176" width="1.4" height="7" fill="#4a4a4a"/><rect x="627.5" y="176" width="1.4" height="7" fill="#4a4a4a"/><rect x="639.4" y="176" width="1.4" height="7" fill="#4a4a4a"/><rect x="651.2" y="170" width="1.6" height="20" fill="#666"/><rect x="663.0" y="176" width="1.4" height="7" fill="#4a4a4a"/><rect x="674.9" y="176" width="1.4" height="7" fill="#4a4a4a"/><rect x="686.7" y="176" width="1.4" height="7" fill="#4a4a4a"/><rect x="698.6" y="176" width="1.4" height="7" fill="#4a4a4a"/><rect x="710.4" y="170" width="1.6" height="20" fill="#666"/><rect x="722.2" y="176" width="1.4" height="7" fill="#4a4a4a"/><rect x="734.1" y="176" width="1.4" height="7" fill="#4a4a4a"/><rect x="745.9" y="176" width="1.4" height="7" fill="#4a4a4a"/><rect x="757.8" y="176" width="1.4" height="7" fill="#4a4a4a"/><rect x="769.6" y="170" width="1.6" height="20" fill="#666"/><rect x="781.4" y="176" width="1.4" height="7" fill="#4a4a4a"/><rect x="793.3" y="176" width="1.4" height="7" fill="#4a4a4a"/><rect x="805.1" y="176" width="1.4" height="7" fill="#4a4a4a"/><rect x="817.0" y="176" width="1.4" height="7" fill="#4a4a4a"/><rect x="828.8" y="170" width="1.6" height="20" fill="#666"/><rect x="840.6" y="176" width="1.4" height="7" fill="#4a4a4a"/><rect x="852.5" y="176" width="1.4" height="7" fill="#4a4a4a"/><rect x="864.3" y="176" width="1.4" height="7" fill="#4a4a4a"/><rect x="876.2" y="176" width="1.4" height="7" fill="#4a4a4a"/><rect x="888.0" y="170" width="1.6" height="20" fill="#666"/><rect x="899.8" y="176" width="1.4" height="7" fill="#4a4a4a"/><rect x="911.7" y="176" width="1.4" height="7" fill="#4a4a4a"/><rect x="923.5" y="176" width="1.4" height="7" fill="#4a4a4a"/><rect x="935.4" y="176" width="1.4" height="7" fill="#4a4a4a"/><rect x="947.2" y="170" width="1.6" height="20" fill="#666"/><rect x="959.0" y="176" width="1.4" height="7" fill="#4a4a4a"/><rect x="970.9" y="176" width="1.4" height="7" fill="#4a4a4a"/><rect x="982.7" y="176" width="1.4" height="7" fill="#4a4a4a"/><rect x="994.6" y="176" width="1.4" height="7" fill="#4a4a4a"/><rect x="1006.4" y="170" width="1.6" height="20" fill="#666"/><rect x="1018.2" y="176" width="1.4" height="7" fill="#4a4a4a"/><rect x="1030.1" y="176" width="1.4" height="7" fill="#4a4a4a"/><rect x="1041.9" y="176" width="1.4" height="7" fill="#4a4a4a"/><rect x="1053.8" y="176" width="1.4" height="7" fill="#4a4a4a"/><rect x="1065.6" y="170" width="1.6" height="20" fill="#666"/><rect x="1077.4" y="176" width="1.4" height="7" fill="#4a4a4a"/><rect x="1089.3" y="176" width="1.4" height="7" fill="#4a4a4a"/><rect x="1101.1" y="176" width="1.4" height="7" fill="#4a4a4a"/><rect x="1113.0" y="176" width="1.4" height="7" fill="#4a4a4a"/><rect x="1124.8" y="170" width="1.6" height="20" fill="#666"/><rect x="1136.6" y="176" width="1.4" height="7" fill="#4a4a4a"/><rect x="1148.5" y="176" width="1.4" height="7" fill="#4a4a4a"/><rect x="1160.3" y="176" width="1.4" height="7" fill="#4a4a4a"/><rect x="1172.2" y="176" width="1.4" height="7" fill="#4a4a4a"/><rect x="1184.0" y="170" width="1.6" height="20" fill="#666"/><circle cx="61.0" cy="180" r="6" fill="none" stroke="#3b78cc" stroke-width="1.6"/><rect x="61.0" y="155" width="1.5" height="9" fill="#3b78cc"/><circle cx="121.0" cy="180" r="6" fill="none" stroke="#3b78cc" stroke-width="1.6"/><rect x="121.0" y="155" width="1.5" height="9" fill="#3b78cc"/><circle cx="178.0" cy="180" r="6" fill="none" stroke="#3b78cc" stroke-width="1.6"/><rect x="178.0" y="155" width="1.5" height="9" fill="#3b78cc"/><circle cx="298.0" cy="180" r="6" fill="none" stroke="#3b78cc" stroke-width="1.6"/><rect x="298.0" y="155" width="1.5" height="9" fill="#3b78cc"/><circle cx="357.0" cy="180" r="6" fill="none" stroke="#3b78cc" stroke-width="1.6"/><rect x="357.0" y="155" width="1.5" height="9" fill="#3b78cc"/><circle cx="424.0" cy="180" r="6" fill="none" stroke="#3b78cc" stroke-width="1.6"/><rect x="424.0" y="155" width="1.5" height="9" fill="#3b78cc"/><circle cx="446.0" cy="180" r="6" fill="none" stroke="#3b78cc" stroke-width="1.6"/><rect x="446.0" y="155" width="1.5" height="9" fill="#3b78cc"/><circle cx="476.5" cy="180" r="6" fill="none" stroke="#3b78cc" stroke-width="1.6"/><rect x="476.5" y="155" width="1.5" height="9" fill="#3b78cc"/><circle cx="521.0" cy="180" r="6" fill="none" stroke="#3b78cc" stroke-width="1.6"/><rect x="521.0" y="155" width="1.5" height="9" fill="#3b78cc"/><circle cx="535.0" cy="180" r="6" fill="none" stroke="#3b78cc" stroke-width="1.6"/><rect x="535.0" y="155" width="1.5" height="9" fill="#3b78cc"/><circle cx="548.5" cy="180" r="6" fill="none" stroke="#3b78cc" stroke-width="1.6"/><rect x="548.5" y="155" width="1.5" height="9" fill="#3b78cc"/><circle cx="561.5" cy="180" r="6" fill="none" stroke="#3b78cc" stroke-width="1.6"/><rect x="561.5" y="155" width="1.5" height="9" fill="#3b78cc"/><circle cx="578.0" cy="180" r="6" fill="none" stroke="#3b78cc" stroke-width="1.6"/><rect x="578.0" y="155" width="1.5" height="9" fill="#3b78cc"/><circle cx="591.5" cy="180" r="6" fill="none" stroke="#3b78cc" stroke-width="1.6"/><rect x="591.5" y="155" width="1.5" height="9" fill="#3b78cc"/><circle cx="735.0" cy="180" r="6" fill="none" stroke="#3b78cc" stroke-width="1.6"/><rect x="735.0" y="155" width="1.5" height="9" fill="#3b78cc"/><circle cx="779.5" cy="180" r="6" fill="none" stroke="#3b78cc" stroke-width="1.6"/><rect x="779.5" y="155" width="1.5" height="9" fill="#3b78cc"/><circle cx="807.5" cy="180" r="6" fill="none" stroke="#3b78cc" stroke-width="1.6"/><rect x="807.5" y="155" width="1.5" height="9" fill="#3b78cc"/><circle cx="1090.0" cy="180" r="6.5" fill="#4a90ea"/><rect x="1090.0" y="155" width="1.5" height="9" fill="#3b78cc"/><rect x="556.0" y="156" width="10" height="9" fill="#4a90ea"/></svg>
<div class="a t" style="left:753.0px;top:196.6px;font-size:12.0px;font-weight:bold;color:#4b8ce6;letter-spacing:-0.34px;">00341</div>
<div class="a " style="left:794px;top:194px;width:8px;height:15px;background:#4a90ea;border-radius:2px"></div>
<div class="a t" style="left:804.0px;top:196.6px;font-size:12.0px;font-weight:bold;color:#4b8ce6;letter-spacing:0.83px;">14:23</div>
<div class="a " style="left:133px;top:213px;width:51px;height:10px;background:#121212"></div>
<div class="a " style="left:184px;top:213px;width:51px;height:10px;background:#595959"></div>
<div class="a tile" style="left:24px;top:155px;width:101px;height:101px;"></div>
<div class="a " style="left:25px;top:245px;width:99px;height:10px;background:#232323;border-radius:0 0 3px 3px"></div>
<div class="a t" style="left:48.0px;top:245.3px;font-size:10.5px;font-weight:normal;color:#7c7c7c;letter-spacing:0.14px;">SelectRect</div>
<svg class="a" style="left:42px;top:162px" width="62" height="61"><rect x="2.5" y="2.5" width="57" height="56" fill="none" stroke="#e8e8e8" stroke-width="3.2" stroke-dasharray="5.5 3.5"/></svg>
<div class="a tile" style="left:21px;top:259px;width:100px;height:100px;"></div>
<div class="a " style="left:22px;top:348px;width:98px;height:10px;background:#232323;border-radius:0 0 3px 3px"></div>
<div class="a t" style="left:60.0px;top:348.3px;font-size:10.5px;font-weight:normal;color:#7c7c7c;letter-spacing:0.14px;">Rect</div>
<div class="a " style="left:37px;top:264px;width:67px;height:68px;border:5px solid #ececec"></div>
<div class="a tile" style="left:21px;top:362px;width:100px;height:100px;"></div>
<div class="a " style="left:22px;top:451px;width:98px;height:10px;background:#232323;border-radius:0 0 3px 3px"></div>
<div class="a t" style="left:44.0px;top:451.3px;font-size:10.5px;font-weight:normal;color:#7c7c7c;letter-spacing:1.05px;">Alpha Off</div>
<div class="a tile" style="left:21px;top:466px;width:100px;height:100px;"></div>
<div class="a " style="left:22px;top:555px;width:98px;height:10px;background:#232323;border-radius:0 0 3px 3px"></div>
<div class="a t" style="left:38.0px;top:555.3px;font-size:10.5px;font-weight:normal;color:#7c7c7c;letter-spacing:1.38px;">Texture Off</div>
<div class="a tile" style="left:21px;top:569px;width:100px;height:101px;"></div>
<div class="a " style="left:22px;top:659px;width:98px;height:10px;background:#232323;border-radius:0 0 3px 3px"></div>
<div class="a t" style="left:43.0px;top:659.3px;font-size:10.5px;font-weight:normal;color:#7c7c7c;letter-spacing:-0.07px;">SkinShade4</div>
<svg class="a" style="left:27px;top:568px" width="86" height="86"><defs><radialGradient id="sph" cx="0.45" cy="0.3" r="0.75"><stop offset="0" stop-color="#fff"/><stop offset="0.6" stop-color="#fff"/><stop offset="0.85" stop-color="#f6e4ea"/><stop offset="1" stop-color="#c99aa8"/></radialGradient></defs><circle cx="43" cy="43" r="42" fill="url(#sph)"/></svg>
<svg class="a" style="left:19px;top:676px" width="104" height="104" viewBox="0 0 104 104"><defs>
<linearGradient id="hx" x1="0" y1="0" x2="1" y2="0"><stop offset="0" stop-color="#f00"/><stop offset="0.25" stop-color="#ff8000"/><stop offset="0.5" stop-color="#ff0"/><stop offset="0.8" stop-color="#8f0"/><stop offset="1" stop-color="#0f0"/></linearGradient>
<linearGradient id="hb" x1="0" y1="0" x2="1" y2="0"><stop offset="0" stop-color="#8000ff"/><stop offset="0.4" stop-color="#00f"/><stop offset="0.75" stop-color="#0af"/><stop offset="1" stop-color="#0ff"/></linearGradient>
<linearGradient id="hl" x1="0" y1="0" x2="0" y2="1"><stop offset="0" stop-color="#f00"/><stop offset="0.3" stop-color="#f08"/><stop offset="0.6" stop-color="#e0f"/><stop offset="1" stop-color="#80f"/></linearGradient>
<linearGradient id="hr" x1="0" y1="0" x2="0" y2="1"><stop offset="0" stop-color="#0f0"/><stop offset="0.45" stop-color="#0f0"/><stop offset="1" stop-color="#0ff"/></linearGradient>
<linearGradient id="sx" x1="0" y1="0" x2="1" y2="0"><stop offset="0" stop-color="#fff"/><stop offset="1" stop-color="#f00"/></linearGradient>
<linearGradient id="sy" x1="0" y1="0" x2="0" y2="1"><stop offset="0" stop-color="#000" stop-opacity="0"/><stop offset="1" stop-color="#000"/></linearGradient>
</defs>
<rect x="0" y="0" width="104" height="104" fill="url(#hl)"/>
<rect x="86" y="0" width="18" height="104" fill="url(#hr)"/>
<rect x="0" y="0" width="104" height="17" fill="url(#hx)"/>
<rect x="0" y="86" width="104" height="18" fill="url(#hb)"/>
<rect x="17" y="17" width="70" height="70" fill="url(#sx)"/>
<rect x="17" y="17" width="70" height="70" fill="url(#sy)"/>
<rect x="3" y="3" width="10" height="10" fill="#e00" stroke="#fff" stroke-width="1.5"/>
<rect x="17.5" y="16.5" width="5" height="5" fill="#fff" stroke="#000" stroke-width="1"/>
</svg>
<div class="a bt" style="left:21px;top:783px;width:100px;height:20px;"></div>
<div class="a t" style="left:24.0px;top:786.5px;font-size:12.5px;font-weight:bold;color:#a8a8a8;letter-spacing:0.52px;">Gradient</div>
<div class="a " style="left:20px;top:807px;width:49px;height:49px;background:#000;border:1px solid #222;border-radius:3px"></div>
<div class="a " style="left:73px;top:807px;width:48px;height:49px;background:linear-gradient(#f0f0f0,#f0f0f0 12%,#fff 14%);border:1px solid #222;border-radius:3px"></div>
<div class="a bt" style="left:21px;top:859px;width:100px;height:23px;"></div>
<div class="a t" style="left:24.0px;top:863.5px;font-size:12.5px;font-weight:bold;color:#a8a8a8;letter-spacing:0.11px;">SwitchColor</div>
<div class="a gb" style="left:21px;top:885px;width:100px;height:23px;"></div>
<div class="a t" style="left:25.0px;top:889.5px;font-size:12.5px;font-weight:bold;color:#000;letter-spacing:1.10px;">Alternate</div>
<svg class="a" style="left:3px;top:628px" width="10" height="150"><defs><pattern id="dots" width="3" height="3" patternUnits="userSpaceOnUse"><rect width="1.5" height="1.5" fill="#2e2e2e"/></pattern></defs><rect x="1" y="0" width="8" height="58" fill="url(#dots)"/><rect x="1" y="92" width="8" height="58" fill="url(#dots)"/><path d="M2 62l7 6-7 6z" fill="#3a3a3a"/><path d="M9 76l-7 6 7 6z" fill="#3a3a3a"/></svg>
<svg class="a" style="left:1516px;top:629px" width="10" height="146"><rect x="1" y="0" width="8" height="146" fill="url(#dots)"/></svg>
<div class="a " style="left:1515px;top:686px;width:12px;height:30px;background:#181818"></div>
<svg class="a" style="left:1515px;top:688px" width="10" height="30"><path d="M2 0l7 6-7 6z" fill="#3a3a3a"/><path d="M9 14l-7 6 7 6z" fill="#3a3a3a"/></svg>
<div class="a bt" style="left:1460px;top:154px;width:48px;height:49px;"></div>
<svg class="a" style="left:1466px;top:160px" width="36" height="37"><defs><radialGradient id="bpr" cx="0.4" cy="0.35" r="0.6"><stop offset="0" stop-color="#8a8a8a"/><stop offset="1" stop-color="#3a3a3a"/></radialGradient></defs><rect width="36" height="37" fill="#4a4a4a"/><circle cx="14" cy="14" r="13" fill="url(#bpr)"/><text x="18" y="33" font-family="Liberation Sans" font-weight="bold" font-size="11" fill="#9a9a9a" text-anchor="middle">BPR</text></svg>
<div class="a t" style="left:1463.0px;top:207.6px;font-size:12.0px;font-weight:bold;color:#b0b0b0;letter-spacing:-0.00px;">SPix 3</div>
<div class="a " style="left:1460px;top:225px;width:48px;height:2px;background:linear-gradient(90deg,#1d1d1d,#444 50%,#1d1d1d)"></div>
<div class="a " style="left:1474px;top:222px;width:17px;height:7px;background:#3f90ee;border-radius:3px"></div>
<div class="a bt" style="left:1460px;top:233px;width:48px;height:47px;"></div>
<svg class="a" style="left:1466px;top:237px" width="36" height="24" viewBox="0 0 36 24"><path d="M5 21l-4-8 2-1 3 3V3h2v8V1h2v10V2h2v9V4h2v11l-2 6z" fill="#9a9a9a"/><rect x="18" y="4" width="16" height="15" fill="#666"/><path d="M26 5v13M19 11h14" stroke="#333" stroke-width="1.4"/></svg>
<div class="a t" style="left:1468.0px;top:261.2px;font-size:11.5px;font-weight:normal;color:#a6a6a6;letter-spacing:0.05px;">Scroll</div>
<div class="a bt" style="left:1460px;top:285px;width:48px;height:47px;"></div>
<svg class="a" style="left:1466px;top:289px" width="36" height="24" viewBox="0 0 36 24"><circle cx="10" cy="8" r="6" fill="#444" stroke="#aaa" stroke-width="2"/><path d="M5.5 12.5L1 18" stroke="#aaa" stroke-width="2.5"/><rect x="18" y="5" width="16" height="14" fill="#666"/><path d="M26 6v12M23 9l3-3 3 3M23 15l3 3 3-3" stroke="#333" stroke-width="1.4" fill="none"/></svg>
<div class="a t" style="left:1469.0px;top:312.6px;font-size:11.5px;font-weight:normal;color:#a6a6a6;letter-spacing:-0.80px;">Zoom</div>
<div class="a bt" style="left:1460px;top:336px;width:48px;height:48px;"></div>
<svg class="a" style="left:1466px;top:341px" width="36" height="24" viewBox="0 0 36 24"><circle cx="10" cy="8" r="6" fill="#444" stroke="#aaa" stroke-width="2"/><path d="M5.5 12.5L1 18" stroke="#aaa" stroke-width="2.5"/><rect x="18" y="5" width="16" height="14" fill="#666"/><text x="26" y="17" font-family="Liberation Sans" font-size="11" fill="#333" text-anchor="middle">x1</text></svg>
<div class="a t" style="left:1467.0px;top:364.6px;font-size:11.5px;font-weight:normal;color:#a6a6a6;letter-spacing:-0.19px;">Actual</div>
<div class="a bt" style="left:1460px;top:388px;width:48px;height:47px;"></div>
<svg class="a" style="left:1466px;top:393px" width="36" height="24" viewBox="0 0 36 24"><circle cx="10" cy="8" r="6" fill="#444" stroke="#aaa" stroke-width="2"/><path d="M5.5 12.5L1 18" stroke="#aaa" stroke-width="2.5"/><rect x="18" y="5" width="16" height="14" fill="#555"/><rect x="26" y="5" width="8" height="8" fill="#999"/></svg>
<div class="a t" style="left:1466.0px;top:416.6px;font-size:11.5px;font-weight:normal;color:#a6a6a6;letter-spacing:-0.56px;">AAHalf</div>
<div class="a" style="left:1460px;top:440px;width:48px;height:47px;background:#1e1e1e;border-radius:4px"></div><svg class="a" style="left:1466px;top:446px" width="36" height="24" viewBox="0 0 36 24"><path d="M1 4h34M1 10h34M1 17h34M6 4l-5 13M13 4l-3 13M23 4l3 13M30 4l5 13M18 4v13" stroke="#8a8a8a" stroke-width="1.6" fill="none"/></svg>
<div class="a t" style="left:1468.0px;top:468.6px;font-size:11.5px;font-weight:normal;color:#a6a6a6;letter-spacing:-0.01px;">Persp</div>
<div class="a " style="left:1460px;top:491px;width:48px;height:48px;background:#1e1e1e;border-radius:4px"></div>
<div class="a t" style="left:1477.0px;top:492.6px;font-size:9.0px;font-weight:bold;color:#7a7a7a;letter-spacing:0.62px;">x y z</div>
<svg class="a" style="left:1466px;top:505px" width="36" height="24" viewBox="0 0 36 24"><path d="M18 1v8M14 6l4 4 4-4" stroke="#aaa" stroke-width="2.2" fill="none"/><rect x="3" y="13" width="30" height="2.5" fill="#aaa"/></svg>
<div class="a t" style="left:1470.0px;top:520.4px;font-size:11.5px;font-weight:normal;color:#a6a6a6;letter-spacing:0.20px;">Floor</div>
<div class="a gb" style="left:1460px;top:543px;width:48px;height:47px;"></div>
<svg class="a" style="left:1466px;top:546px" width="36" height="26"><circle cx="23" cy="11" r="9" fill="#000"/><circle cx="21" cy="9" r="4" fill="#222"/><path d="M4 6c3-4 8-3 8 0M3 11c3-4 8-3 8 1M9 16l-3 4 4 1" stroke="#000" stroke-width="1.8" fill="none"/></svg>
<div class="a t" style="left:1470.7px;top:571.2px;font-size:11.5px;font-weight:normal;color:#000;letter-spacing:-0.50px;">Local</div>
<div class="a " style="left:1460px;top:595px;width:48px;height:47px;background:#1e1e1e;border-radius:4px"></div>
<svg class="a" style="left:1466px;top:604px" width="36" height="24" viewBox="0 0 36 24"><path d="M2 10h32" stroke="#9a9a9a" stroke-width="1.6"/><path d="M4 6l5-4v8zM32 6l-5-4v8z" fill="#9a9a9a"/><path d="M9 6h6M21 6h6M18 1v12" stroke="#9a9a9a" stroke-width="1.8"/></svg>
<div class="a t" style="left:1468.0px;top:624.6px;font-size:11.5px;font-weight:normal;color:#a6a6a6;letter-spacing:-0.15px;">L.Sym</div>
<div class="a gb" style="left:1460px;top:647px;width:48px;height:22px;"></div>
<svg class="a" style="left:1466px;top:648px" width="14" height="18"><path d="M10 4a5 5 0 1 0 0 8" stroke="#000" stroke-width="1.8" fill="none"/><path d="M6 11l4 4 2-5z" fill="#000"/></svg>
<div class="a t" style="left:1477.0px;top:655.6px;font-size:11.5px;font-weight:bold;color:#000;letter-spacing:-0.18px;">XYZ</div>
<svg class="a" style="left:1475px;top:677px" width="18" height="16"><path d="M10 3a5 5 0 1 0-2 9" stroke="#a0a0a0" stroke-width="1.6" fill="none"/><path d="M7 9l3 4 2-4z" fill="#a0a0a0"/><text x="13" y="15" font-family="Liberation Sans" font-size="9" fill="#a0a0a0">Y</text></svg>
<svg class="a" style="left:1482px;top:700px" width="18" height="17"><path d="M10 3a5 5 0 1 0-2 9" stroke="#a0a0a0" stroke-width="1.6" fill="none"/><path d="M7 9l3 4 2-4z" fill="#a0a0a0"/><text x="11" y="16" font-family="Liberation Sans" font-size="9" fill="#a0a0a0">Z</text></svg>
<div class="a bt" style="left:1460px;top:724px;width:48px;height:47px;"></div>
<svg class="a" style="left:1466px;top:731px" width="36" height="24" viewBox="0 0 36 24"><circle cx="18" cy="12" r="5" fill="#888"/><path d="M8 3l-4 0v4M4 3l5 5M28 3h4v4M32 3l-5 5M8 21H4v-4M4 21l5-5M28 21h4v-4M32 21l-5-5" stroke="#9a9a9a" stroke-width="1.4" fill="none"/></svg>
<div class="a t" style="left:1468.0px;top:753.4px;font-size:11.5px;font-weight:normal;color:#a6a6a6;letter-spacing:-0.31px;">Frame</div>
<div class="a bt" style="left:1460px;top:776px;width:48px;height:47px;"></div>
<svg class="a" style="left:1466px;top:780px" width="36" height="24" viewBox="0 0 36 24"><circle cx="22" cy="10" r="8" fill="#555"/><rect x="19" y="7" width="6" height="6" fill="none" stroke="#999"/><path d="M5 21l-4-8 2-1 3 3V3h2v8V1h2v10V2h2v9V4h2v11l-2 6z" fill="#9a9a9a"/></svg>
<div class="a t" style="left:1469.0px;top:805.3px;font-size:11.5px;font-weight:normal;color:#a6a6a6;letter-spacing:-0.04px;">Move</div>
<div class="a bt" style="left:1460px;top:828px;width:48px;height:47px;"></div>
<svg class="a" style="left:1466px;top:832px" width="36" height="24" viewBox="0 0 36 24"><circle cx="22" cy="10" r="8" fill="#555"/><rect x="19" y="7" width="6" height="6" fill="none" stroke="#999"/><circle cx="10" cy="8" r="6" fill="#444" stroke="#aaa" stroke-width="2"/><path d="M5.5 12.5L1 18" stroke="#aaa" stroke-width="2.5"/></svg>
<div class="a t" style="left:1469.0px;top:857.1px;font-size:11.5px;font-weight:normal;color:#a6a6a6;letter-spacing:-0.19px;">Scale</div>
<div class="a bt" style="left:1460px;top:879px;width:48px;height:48px;"></div>
<svg class="a" style="left:1466px;top:884px" width="36" height="24" viewBox="0 0 36 24"><circle cx="16" cy="14" r="8" fill="#555"/><path d="M10 8a7 7 0 0 1 12-2M24 12l3 5-5 2" stroke="#aaa" stroke-width="1.8" fill="none"/><rect x="13" y="11" width="6" height="6" fill="none" stroke="#999"/></svg>
<div class="a t" style="left:1467.0px;top:908.6px;font-size:11.5px;font-weight:normal;color:#a6a6a6;letter-spacing:-0.18px;">Rotate</div>
<div class="a " style="left:1460px;top:931px;width:48px;height:48px;background:#1e1e1e;border-radius:4px"></div>
<svg class="a" style="left:1470px;top:941px" width="30" height="20"><rect x="0.5" y="0.5" width="29" height="19" fill="none" stroke="#9a9a9a" stroke-width="1.2"/><path d="M0 5h30M0 10h30M0 15h30M5 0v20M10 0v20M15 0v20M20 0v20M25 0v20" stroke="#9a9a9a" stroke-width="0.8"/></svg>
<div class="a t" style="left:1470.0px;top:962.3px;font-size:11.5px;font-weight:normal;color:#a6a6a6;letter-spacing:-0.60px;">PolyF</div>
<div class="a " style="left:1460px;top:982px;width:48px;height:48px;background:#1e1e1e;border-radius:4px"></div>
<svg class="a" style="left:1472px;top:990px" width="28" height="24"><rect x="7" y="1" width="16" height="16" fill="#444" stroke="#888" stroke-width="1.2"/><circle cx="8" cy="14" r="7" fill="#777" fill-opacity="0.8"/></svg>
<div class="a t" style="left:1468.0px;top:1013.1px;font-size:11.5px;font-weight:normal;color:#a6a6a6;letter-spacing:-1.07px;">Transp</div>
<svg class="a" style="left:1472px;top:1042px" width="26" height="22"><circle cx="11" cy="12" r="9" fill="#333"/><path d="M4 20L20 2" stroke="#3a3a3a" stroke-width="2"/></svg>
<div class="a t" style="left:1468.0px;top:1064.6px;font-size:11.5px;font-weight:normal;color:#444;letter-spacing:-0.92px;">Ghost</div>
<div class="a gb" style="left:1460px;top:1086px;width:48px;height:48px;"></div>
<svg class="a" style="left:1468px;top:1098px" width="32" height="22"><circle cx="9" cy="12" r="7" fill="#3a7a00"/><circle cx="23" cy="12" r="7" fill="#3a7a00"/><circle cx="16" cy="8" r="7" fill="#000"/></svg>
<div class="a t" style="left:1473.0px;top:1117.6px;font-size:11.5px;font-weight:normal;color:#000;letter-spacing:-1.01px;">Solo</div>
<div class="a bt" style="left:1460px;top:1138px;width:48px;height:48px;"></div>
<svg class="a" style="left:1466px;top:1144px" width="36" height="24" viewBox="0 0 36 24"><circle cx="18" cy="12" r="1.5" fill="#aaa"/><path d="M10 4l-3 0v3M7 4l6 6M26 4h3v3M29 4l-6 6M10 20H7v-3M7 20l6-6M26 20h3v-3M29 20l-6-6M2 12h10M24 12h10M5 9l-3 3 3 3M31 9l3 3-3 3" stroke="#9a9a9a" stroke-width="1.3" fill="none"/></svg>
<div class="a t" style="left:1469.0px;top:1166.6px;font-size:11.5px;font-weight:normal;color:#a6a6a6;letter-spacing:-0.90px;">Xpose</div>
<div class="a " style="left:1555px;top:82px;width:216px;height:449px;background:#262626;border:1px solid #111;border-radius:9px;box-shadow:inset 0 0 0 5px #2c2c2c,inset 0 0 0 6px #262626"></div>
<div class="a bt" style="left:1560px;top:88px;width:101px;height:23px;"></div>
<div class="a t" style="left:1564.0px;top:93.5px;font-size:12.5px;font-weight:bold;color:#b4b4b4;letter-spacing:0.65px;">Load Tool</div>
<div class="a bt" style="left:1664px;top:88px;width:101px;height:23px;"></div>
<div class="a t" style="left:1668.0px;top:93.5px;font-size:12.5px;font-weight:bold;color:#b4b4b4;letter-spacing:0.64px;">Save As</div>
<div class="a bt" style="left:1560px;top:114px;width:101px;height:23px;"></div>
<div class="a t" style="left:1564.0px;top:119.5px;font-size:12.5px;font-weight:bold;color:#b4b4b4;letter-spacing:1.62px;">Import</div>
<div class="a bt" style="left:1664px;top:114px;width:101px;height:23px;"></div>
<div class="a t" style="left:1668.0px;top:119.5px;font-size:12.5px;font-weight:bold;color:#b4b4b4;letter-spacing:0.68px;">Export</div>
<div class="a bt" style="left:1560px;top:140px;width:49px;height:23px;"></div>
<div class="a t" style="left:1564.0px;top:145.5px;font-size:12.5px;font-weight:bold;color:#b4b4b4;letter-spacing:-0.18px;">Clone</div>
<div class="a bt" style="left:1612px;top:140px;width:153px;height:23px;"></div>
<div class="a t" style="left:1616.0px;top:145.5px;font-size:12.5px;font-weight:bold;color:#b4b4b4;letter-spacing:0.39px;">Make PolyMesh3D</div>
<div class="a bt" style="left:1560px;top:166px;width:205px;height:23px;"></div>
<div class="a t" style="left:1564.0px;top:171.5px;font-size:12.5px;font-weight:bold;color:#b4b4b4;letter-spacing:0.34px;">Clone All SubTools</div>
<div class="a bt" style="left:1560px;top:192px;width:49px;height:23px;"></div>
<div class="a t" style="left:1564.0px;top:197.5px;font-size:12.5px;font-weight:bold;color:#b4b4b4;letter-spacing:-1.50px;">GoZ</div>
<div class="a bt" style="left:1612px;top:192px;width:49px;height:23px;"></div>
<div class="a t" style="left:1616.0px;top:197.5px;font-size:12.5px;font-weight:bold;color:#b4b4b4;letter-spacing:0.01px;">All</div>
<div class="a bt" style="left:1664px;top:192px;width:74px;height:23px;"></div>
<div class="a t" style="left:1668.0px;top:197.5px;font-size:12.5px;font-weight:bold;color:#b4b4b4;letter-spacing:-0.01px;">Visible</div>
<div class="a bt" style="left:1741px;top:192px;width:24px;height:23px;"></div>
<div class="a t" style="left:1745.0px;top:197.5px;font-size:12.5px;font-weight:bold;color:#b4b4b4;letter-spacing:-1.03px;">R</div>
<div class="a bt" style="left:1560px;top:218px;width:205px;height:23px;"></div>
<div class="a t" style="left:1564.0px;top:223.5px;font-size:12.5px;font-weight:bold;color:#b4b4b4;letter-spacing:0.21px;">Lightbox&#9656; Tools</div>
<div class="a t" style="left:1564.4px;top:244.7px;font-size:12.5px;font-weight:bold;color:#b4b4b4;letter-spacing:0.53px;">Hepatic_veins. 55</div>
<div class="a " style="left:1568px;top:261px;width:170px;height:2px;background:linear-gradient(90deg,#222,#555 70%,#333)"></div>
<div class="a " style="left:1713px;top:259px;width:17px;height:7px;background:#3f90ee;border-radius:3px"></div>
<div class="a bt" style="left:1741px;top:244px;width:24px;height:23px;"></div>
<div class="a t" style="left:1745.0px;top:250.5px;font-size:12.5px;font-weight:bold;color:#b4b4b4;letter-spacing:-1.03px;">R</div>
<div class="a " style="left:1561px;top:269px;width:100px;height:101px;background:#343434;border:1px solid #0e0e0e;border-radius:4px;overflow:hidden"></div>
<div class="a " style="left:1562px;top:359px;width:98px;height:10px;background:#262626"></div>
<svg class="a" style="left:1562px;top:270px;filter:brightness(0.78) saturate(1.3)" width="98" height="89" viewBox="1562 270 98 89"><use href="#veinsym" transform="translate(1527.7,233) scale(0.108)"/></svg>
<div class="a t" style="left:1565.0px;top:271.8px;font-size:10.5px;font-weight:normal;color:#ddd;">31</div>
<div class="a t" style="left:1577.0px;top:358.8px;font-size:10.5px;font-weight:normal;color:#6e6e6e;letter-spacing:0.25px;">Hepatic_veins</div>
<div class="a " style="left:1666px;top:270px;width:100px;height:50px;background:#1d1d1d;border-radius:3px"></div>
<div class="a t" style="left:1686.7px;top:306.5px;font-size:11.0px;font-weight:normal;color:#b8b8b8;letter-spacing:-0.17px;">AlphaBrush</div>
<div class="a " style="left:1666px;top:322px;width:100px;height:50px;background:#1d1d1d;border-radius:3px"></div>
<div class="a t" style="left:1685.0px;top:358.0px;font-size:11.0px;font-weight:normal;color:#b8b8b8;letter-spacing:-0.24px;">SimpleBrush</div>
<div class="a " style="left:1561px;top:374px;width:100px;height:50px;background:#1d1d1d;border-radius:3px"></div>
<div class="a t" style="left:1580.0px;top:409.7px;font-size:11.0px;font-weight:normal;color:#b8b8b8;letter-spacing:0.19px;">EraserBrush</div>
<div class="a " style="left:1666px;top:374px;width:100px;height:50px;background:#1d1d1d;border-radius:3px"></div>
<div class="a t" style="left:1690.0px;top:409.7px;font-size:11.0px;font-weight:normal;color:#b8b8b8;letter-spacing:-0.08px;">Sphere3D</div>
<div class="a " style="left:1561px;top:426px;width:100px;height:50px;background:#1d1d1d;border-radius:3px"></div>
<div class="a t" style="left:1581.0px;top:461.6px;font-size:11.0px;font-weight:normal;color:#b8b8b8;letter-spacing:-0.15px;">PolyMesh3D</div>
<div class="a " style="left:1666px;top:426px;width:100px;height:50px;background:#1d1d1d;border-radius:3px"></div>
<div class="a t" style="left:1685.0px;top:461.6px;font-size:11.0px;font-weight:normal;color:#b8b8b8;letter-spacing:-0.11px;">ClonerBrush</div>
<svg class="a" style="left:1695px;top:270px" width="38" height="36"><defs><radialGradient id="ab" cx="0.35" cy="0.3" r="0.8"><stop offset="0" stop-color="#eef"/><stop offset="0.25" stop-color="#8a9ae8"/><stop offset="0.6" stop-color="#3040b8"/><stop offset="1" stop-color="#101860"/></radialGradient></defs><ellipse cx="20" cy="18" rx="16" ry="13" transform="rotate(35 20 18)" fill="url(#ab)"/></svg>
<svg class="a" style="left:1699px;top:321px" width="30" height="36"><defs><linearGradient id="sg" x1="0" y1="0" x2="1" y2="1"><stop offset="0" stop-color="#ffd040"/><stop offset="0.6" stop-color="#f08800"/><stop offset="1" stop-color="#803000"/></linearGradient></defs><path d="M22 5c-6-5-17-2-15 6 2 6 14 5 14 12 0 5-10 7-16 2" fill="none" stroke="url(#sg)" stroke-width="8" stroke-linecap="round"/></svg>
<svg class="a" style="left:1593px;top:372px" width="36" height="36"><circle cx="18" cy="18" r="13" fill="none" stroke="#b0602a" stroke-width="8" stroke-dasharray="62 14" transform="rotate(60 18 18)"/><circle cx="17" cy="7" r="2" fill="#f5d0b0"/></svg>
<svg class="a" style="left:1698px;top:376px" width="33" height="33"><defs><radialGradient id="s3" cx="0.45" cy="0.4" r="0.6"><stop offset="0" stop-color="#d07060"/><stop offset="0.5" stop-color="#a02a10"/><stop offset="1" stop-color="#4a0a00"/></radialGradient></defs><circle cx="16.5" cy="16.5" r="15.5" fill="url(#s3)"/></svg>
<svg class="a" style="left:1593px;top:425px" width="36" height="36" viewBox="-18 -18 36 36"><path d="M0-17L4-6 16-9 8 1 13 13 2 7-4 17-5 5-17 4-7-3-11-15 0-8z" fill="#b84838"/></svg>
<svg class="a" style="left:1692px;top:426px" width="46" height="32"><g font-family="Liberation Sans" font-weight="bold" font-size="11" text-anchor="middle"><text x="23" y="10" fill="#888">CLONE</text><text x="23" y="21" fill="#ddd">CLONE</text><text x="23" y="31" fill="#fff">CLONE</text></g></svg>
<div class="a " style="left:1561px;top:476px;width:100px;height:49px;background:#343434;border:1px solid #0e0e0e;border-radius:4px;overflow:hidden"></div>
<div class="a " style="left:1562px;top:514px;width:98px;height:10px;background:#262626"></div>
<svg class="a" style="left:1562px;top:477px;filter:brightness(0.78) saturate(1.3)" width="98" height="37" viewBox="1562 477 98 37"><use href="#veinsym" transform="translate(1572,460) scale(0.0507)"/></svg>
<div class="a t" style="left:1565.0px;top:479.8px;font-size:10.5px;font-weight:normal;color:#ddd;">31</div>
<div class="a t" style="left:1577.0px;top:513.8px;font-size:10.5px;font-weight:normal;color:#8a8a8a;letter-spacing:0.25px;">Hepatic_veins</div>
<div class="a " style="left:1555px;top:542px;width:216px;height:808px;background:#1e1e1e;border-radius:8px 8px 0 0;border:1px solid #2a2a2a;border-bottom:none"></div>
<div class="a t" style="left:1570.0px;top:546.5px;font-size:12.5px;font-weight:bold;color:#a6a6a6;letter-spacing:-0.01px;">SubTool</div>
<div class="a " style="left:1556px;top:560px;width:214px;height:427px;background:#2b2b2b"></div>
<div class="a " style="left:1564px;top:566px;width:7px;height:418px;background:#222;border-radius:3px"></div>
<div class="a " style="left:1565px;top:567px;width:6px;height:16px;background:#4a90ea;border-radius:3px"></div>
<div class="a " style="left:1579px;top:565px;width:185px;height:48px;background:#2e2e2e;border:1px solid #333;border-radius:4px"></div>
<div class="a t" style="left:1602.7px;top:602.9px;font-size:11.0px;font-weight:normal;color:#b4b4b4;letter-spacing:0.18px;">Whole_liver_ligVen_Caval3</div>
<svg class="a" style="left:1640px;top:567px" width="124" height="14" viewBox="0 -7 124 14"><circle cx="11" cy="0" r="5.5" fill="#7a7a7a"/><circle cx="21" cy="0" r="5.5" fill="#8e8e8e"/><circle cx="38" cy="0" r="5.5" fill="#333"/><path d="M38-5.5a5.5 5.5 0 0 0 0 11a2.5 5.5 0 0 1 0-11z" fill="#474747"/><circle cx="58" cy="0" r="5.5" fill="none" stroke="#3a3a3a" stroke-width="1.5"/><circle cx="66" cy="0" r="5.5" fill="none" stroke="#3a3a3a" stroke-width="1.5"/><path d="M75 6l3-3 11-6 2 2-10 7-3 1z" fill="none" stroke="#8a8a8a" stroke-width="1.2"/><path d="M75 6h6" stroke="#8a8a8a" stroke-width="1.2"/><path d="M102 0q9-8 18 0M105 0a5 5 0 0 0 10 0" fill="none" stroke="#444" stroke-width="1.4"/></svg>
<svg class="a" style="left:1579px;top:568px" width="41" height="32" viewBox="0 0 41 32"><path d="M1 12C3 3 12 1 22 3 30 4 36 2 39 3 34 10 28 16 22 19 14 24 8 28 4 30 1 24 0 18z" fill="#b84560"/></svg>
<div class="a " style="left:1579px;top:617px;width:185px;height:48px;background:#2e2e2e;border:1px solid #333;border-radius:4px"></div>
<div class="a t" style="left:1580.8px;top:654.6px;font-size:11.0px;font-weight:normal;color:#b4b4b4;letter-spacing:0.17px;">Whole_liver_ligVen_Caval optimized</div>
<svg class="a" style="left:1640px;top:619px" width="124" height="14" viewBox="0 -7 124 14"><circle cx="11" cy="0" r="5.5" fill="#7a7a7a"/><circle cx="21" cy="0" r="5.5" fill="#8e8e8e"/><circle cx="38" cy="0" r="5.5" fill="#333"/><path d="M38-5.5a5.5 5.5 0 0 0 0 11a2.5 5.5 0 0 1 0-11z" fill="#474747"/><circle cx="58" cy="0" r="5.5" fill="none" stroke="#3a3a3a" stroke-width="1.5"/><circle cx="66" cy="0" r="5.5" fill="none" stroke="#3a3a3a" stroke-width="1.5"/><path d="M75 6l3-3 11-6 2 2-10 7-3 1z" fill="none" stroke="#8a8a8a" stroke-width="1.2"/><path d="M75 6h6" stroke="#8a8a8a" stroke-width="1.2"/><path d="M102 0q9-8 18 0M105 0a5 5 0 0 0 10 0" fill="none" stroke="#444" stroke-width="1.4"/></svg>
<svg class="a" style="left:1585px;top:618px" width="33" height="36" viewBox="0 0 33 36"><path d="M10 2C16 0 24 6 28 14 31 22 30 30 26 34 18 33 8 28 2 22 0 14 4 6z" fill="#b03a58"/></svg>
<div class="a " style="left:1579px;top:669px;width:185px;height:48px;background:#2e2e2e;border:1px solid #333;border-radius:4px"></div>
<div class="a t" style="left:1652.0px;top:706.3px;font-size:11.0px;font-weight:normal;color:#b4b4b4;letter-spacing:-0.43px;">Caudate</div>
<svg class="a" style="left:1640px;top:670px" width="124" height="14" viewBox="0 -7 124 14"><circle cx="11" cy="0" r="5.5" fill="#7a7a7a"/><circle cx="21" cy="0" r="5.5" fill="#8e8e8e"/><circle cx="38" cy="0" r="5.5" fill="#333"/><path d="M38-5.5a5.5 5.5 0 0 0 0 11a2.5 5.5 0 0 1 0-11z" fill="#474747"/><circle cx="58" cy="0" r="5.5" fill="none" stroke="#3a3a3a" stroke-width="1.5"/><circle cx="66" cy="0" r="5.5" fill="none" stroke="#3a3a3a" stroke-width="1.5"/><path d="M75 6l3-3 11-6 2 2-10 7-3 1z" fill="none" stroke="#8a8a8a" stroke-width="1.2"/><path d="M75 6h6" stroke="#8a8a8a" stroke-width="1.2"/><path d="M102 0q9-8 18 0M105 0a5 5 0 0 0 10 0" fill="none" stroke="#444" stroke-width="1.4"/></svg>
<svg class="a" style="left:1589px;top:670px" width="25" height="38" viewBox="0 0 25 38"><path d="M8 2C14 0 21 2 22 10 23 20 20 30 14 35 8 36 3 32 2 24 1 14 3 6z" fill="#5e1220"/></svg>
<div class="a " style="left:1579px;top:720px;width:185px;height:48px;background:#2e2e2e;border:1px solid #333;border-radius:4px"></div>
<div class="a t" style="left:1626.7px;top:758.0px;font-size:11.0px;font-weight:normal;color:#b4b4b4;letter-spacing:0.01px;">Caudate optimized</div>
<svg class="a" style="left:1640px;top:722px" width="124" height="14" viewBox="0 -7 124 14"><circle cx="11" cy="0" r="5.5" fill="#7a7a7a"/><circle cx="21" cy="0" r="5.5" fill="#8e8e8e"/><circle cx="38" cy="0" r="5.5" fill="#333"/><path d="M38-5.5a5.5 5.5 0 0 0 0 11a2.5 5.5 0 0 1 0-11z" fill="#474747"/><circle cx="58" cy="0" r="5.5" fill="none" stroke="#3a3a3a" stroke-width="1.5"/><circle cx="66" cy="0" r="5.5" fill="none" stroke="#3a3a3a" stroke-width="1.5"/><path d="M75 6l3-3 11-6 2 2-10 7-3 1z" fill="none" stroke="#8a8a8a" stroke-width="1.2"/><path d="M75 6h6" stroke="#8a8a8a" stroke-width="1.2"/><path d="M102 0q9-8 18 0M105 0a5 5 0 0 0 10 0" fill="none" stroke="#444" stroke-width="1.4"/></svg>
<svg class="a" style="left:1586px;top:720px" width="32" height="30" viewBox="0 0 32 30"><path d="M2 4C8 0 16 4 22 10 28 16 30 22 28 27 20 28 12 26 6 20 2 14 0 8z" fill="#8a2238"/></svg>
<div class="a " style="left:1579px;top:772px;width:185px;height:48px;background:#2e2e2e;border:1px solid #333;border-radius:4px"></div>
<div class="a t" style="left:1607.0px;top:809.7px;font-size:11.0px;font-weight:normal;color:#b4b4b4;letter-spacing:0.43px;">Left_hemiliver optimized</div>
<svg class="a" style="left:1640px;top:774px" width="124" height="14" viewBox="0 -7 124 14"><circle cx="11" cy="0" r="5.5" fill="#7a7a7a"/><circle cx="21" cy="0" r="5.5" fill="#8e8e8e"/><circle cx="38" cy="0" r="5.5" fill="#333"/><path d="M38-5.5a5.5 5.5 0 0 0 0 11a2.5 5.5 0 0 1 0-11z" fill="#474747"/><circle cx="58" cy="0" r="5.5" fill="none" stroke="#3a3a3a" stroke-width="1.5"/><circle cx="66" cy="0" r="5.5" fill="none" stroke="#3a3a3a" stroke-width="1.5"/><path d="M75 6l3-3 11-6 2 2-10 7-3 1z" fill="none" stroke="#8a8a8a" stroke-width="1.2"/><path d="M75 6h6" stroke="#8a8a8a" stroke-width="1.2"/><path d="M102 0q9-8 18 0M105 0a5 5 0 0 0 10 0" fill="none" stroke="#444" stroke-width="1.4"/></svg>
<svg class="a" style="left:1587px;top:773px" width="29" height="29" viewBox="0 0 29 29"><path d="M2 6C6 0 16 1 22 6 27 12 27 22 24 27 16 27 8 24 4 18 1 12z" fill="#7e1a30"/></svg>
<div class="a " style="left:1579px;top:824px;width:185px;height:48px;background:#2e2e2e;border:1px solid #333;border-radius:4px"></div>
<div class="a t" style="left:1606.8px;top:861.4px;font-size:11.0px;font-weight:normal;color:#b4b4b4;letter-spacing:0.18px;">Right_hemiliver optimized</div>
<svg class="a" style="left:1640px;top:826px" width="124" height="14" viewBox="0 -7 124 14"><circle cx="11" cy="0" r="5.5" fill="#7a7a7a"/><circle cx="21" cy="0" r="5.5" fill="#8e8e8e"/><circle cx="38" cy="0" r="5.5" fill="#333"/><path d="M38-5.5a5.5 5.5 0 0 0 0 11a2.5 5.5 0 0 1 0-11z" fill="#474747"/><circle cx="58" cy="0" r="5.5" fill="none" stroke="#3a3a3a" stroke-width="1.5"/><circle cx="66" cy="0" r="5.5" fill="none" stroke="#3a3a3a" stroke-width="1.5"/><path d="M75 6l3-3 11-6 2 2-10 7-3 1z" fill="none" stroke="#8a8a8a" stroke-width="1.2"/><path d="M75 6h6" stroke="#8a8a8a" stroke-width="1.2"/><path d="M102 0q9-8 18 0M105 0a5 5 0 0 0 10 0" fill="none" stroke="#444" stroke-width="1.4"/></svg>
<svg class="a" style="left:1582px;top:824px" width="35" height="35" viewBox="0 0 35 35"><path d="M4 8C10 1 22 1 28 8 33 16 32 26 28 32 20 33 10 30 4 24 0 16z" fill="#b03552"/></svg>
<div class="a " style="left:1579px;top:876px;width:185px;height:48px;background:#2e2e2e;border:1px solid #333;border-radius:4px"></div>
<div class="a t" style="left:1581.0px;top:913.1px;font-size:11.0px;font-weight:normal;color:#b4b4b4;letter-spacing:0.50px;">Modified_left_lateral_sector optim</div>
<svg class="a" style="left:1640px;top:877px" width="124" height="14" viewBox="0 -7 124 14"><circle cx="11" cy="0" r="5.5" fill="#7a7a7a"/><circle cx="21" cy="0" r="5.5" fill="#8e8e8e"/><circle cx="38" cy="0" r="5.5" fill="#333"/><path d="M38-5.5a5.5 5.5 0 0 0 0 11a2.5 5.5 0 0 1 0-11z" fill="#474747"/><circle cx="58" cy="0" r="5.5" fill="none" stroke="#3a3a3a" stroke-width="1.5"/><circle cx="66" cy="0" r="5.5" fill="none" stroke="#3a3a3a" stroke-width="1.5"/><path d="M75 6l3-3 11-6 2 2-10 7-3 1z" fill="none" stroke="#8a8a8a" stroke-width="1.2"/><path d="M75 6h6" stroke="#8a8a8a" stroke-width="1.2"/><path d="M102 0q9-8 18 0M105 0a5 5 0 0 0 10 0" fill="none" stroke="#444" stroke-width="1.4"/></svg>
<svg class="a" style="left:1591px;top:877px" width="27" height="36" viewBox="0 0 27 36"><path d="M10 1C18 2 24 10 24 22 23 30 16 34 8 32 2 28 1 18 4 8z" fill="#6a1020"/></svg>
<div class="a " style="left:1579px;top:927px;width:185px;height:48px;background:#2e2e2e;border:1px solid #333;border-radius:4px"></div>
<div class="a t" style="left:1582.0px;top:964.8px;font-size:11.0px;font-weight:normal;color:#b4b4b4;letter-spacing:0.42px;">Modified_left_medial_sector optim</div>
<svg class="a" style="left:1640px;top:929px" width="124" height="14" viewBox="0 -7 124 14"><circle cx="11" cy="0" r="5.5" fill="#7a7a7a"/><circle cx="21" cy="0" r="5.5" fill="#8e8e8e"/><circle cx="38" cy="0" r="5.5" fill="#333"/><path d="M38-5.5a5.5 5.5 0 0 0 0 11a2.5 5.5 0 0 1 0-11z" fill="#474747"/><circle cx="58" cy="0" r="5.5" fill="none" stroke="#3a3a3a" stroke-width="1.5"/><circle cx="66" cy="0" r="5.5" fill="none" stroke="#3a3a3a" stroke-width="1.5"/><path d="M75 6l3-3 11-6 2 2-10 7-3 1z" fill="none" stroke="#8a8a8a" stroke-width="1.2"/><path d="M75 6h6" stroke="#8a8a8a" stroke-width="1.2"/><path d="M102 0q9-8 18 0M105 0a5 5 0 0 0 10 0" fill="none" stroke="#444" stroke-width="1.4"/></svg>
<svg class="a" style="left:1588px;top:929px" width="27" height="34" viewBox="0 0 27 34"><path d="M14 1C20 4 25 14 24 22 22 30 14 32 6 28 1 22 2 14 6 6z" fill="#8a2035"/></svg>
<div class="a bt" style="left:1561px;top:992px;width:100px;height:48px;"></div>
<div class="a t" style="left:1564.0px;top:1009.5px;font-size:12.5px;font-weight:bold;color:#b4b4b4;letter-spacing:0.77px;">List All</div>
<div class="a bt" style="left:1665px;top:992px;width:48px;height:22px;"></div>
<div class="a bt" style="left:1665px;top:1018px;width:48px;height:22px;"></div>
<div class="a bt" style="left:1716px;top:992px;width:49px;height:22px;"></div>
<div class="a bt" style="left:1716px;top:1018px;width:49px;height:22px;"></div>
<svg class="a" style="left:1680px;top:995px" width="20" height="17"><path d="M8 1L2 8h4v7h4V8h4z" fill="#c8c8c8"/></svg>
<svg class="a" style="left:1732px;top:995px" width="20" height="17"><path d="M8 16L2 9h4V2h4v7h4z" fill="#c8c8c8"/></svg>
<svg class="a" style="left:1680px;top:1021px" width="22" height="17"><path d="M3 16V10q0-4 5-4h6V2l6 6-6 6V10H9q-2 0-2 2v4z" fill="#c8c8c8"/></svg>
<svg class="a" style="left:1731px;top:1021px" width="22" height="17"><path d="M3 1v8q0 4 4 4h7v3l6-5-6-5v3H8V1z" fill="#c8c8c8"/></svg>
<div class="a bt" style="left:1561px;top:1044px;width:100px;height:22px;"></div>
<div class="a t" style="left:1564.0px;top:1048.3px;font-size:12.5px;font-weight:bold;color:#b4b4b4;letter-spacing:0.87px;">Rename</div>
<div class="a bt" style="left:1665px;top:1044px;width:100px;height:22px;"></div>
<div class="a t" style="left:1668.0px;top:1048.3px;font-size:12.5px;font-weight:bold;color:#b4b4b4;letter-spacing:0.86px;">AutoReorder</div>
<div class="a bt" style="left:1561px;top:1070px;width:100px;height:22px;"></div>
<div class="a t" style="left:1564.0px;top:1074.1px;font-size:12.5px;font-weight:bold;color:#b4b4b4;letter-spacing:0.43px;">All Low</div>
<div class="a bt" style="left:1665px;top:1070px;width:100px;height:22px;"></div>
<div class="a t" style="left:1668.0px;top:1074.1px;font-size:12.5px;font-weight:bold;color:#b4b4b4;letter-spacing:0.11px;">All High</div>
<div class="a bt" style="left:1561px;top:1121px;width:100px;height:48px;"></div>
<div class="a t" style="left:1564.0px;top:1138.5px;font-size:12.5px;font-weight:bold;color:#b4b4b4;letter-spacing:0.59px;">Duplicate</div>
<div class="a bt" style="left:1665px;top:1121px;width:100px;height:22px;"></div>
<div class="a t" style="left:1668.0px;top:1125.5px;font-size:12.5px;font-weight:bold;color:#b4b4b4;letter-spacing:0.30px;">Append</div>
<div class="a bt" style="left:1665px;top:1147px;width:100px;height:22px;"></div>
<div class="a t" style="left:1668.0px;top:1151.5px;font-size:12.5px;font-weight:bold;color:#b4b4b4;letter-spacing:0.99px;">Insert</div>
<div class="a bt" style="left:1561px;top:1173px;width:100px;height:48px;"></div>
<div class="a t" style="left:1564.0px;top:1190.5px;font-size:12.5px;font-weight:bold;color:#b4b4b4;letter-spacing:1.10px;">Delete</div>
<div class="a bt" style="left:1665px;top:1173px;width:100px;height:22px;"></div>
<div class="a t" style="left:1668.0px;top:1177.5px;font-size:12.5px;font-weight:bold;color:#b4b4b4;letter-spacing:1.09px;">Del Other</div>
<div class="a bt" style="left:1665px;top:1199px;width:100px;height:22px;"></div>
<div class="a t" style="left:1668.0px;top:1203.5px;font-size:12.5px;font-weight:bold;color:#b4b4b4;letter-spacing:1.26px;">Del All</div>
<div class="a " style="left:1556px;top:1224px;width:214px;height:2px;background:#141414"></div>
<div class="a t" style="left:1566.0px;top:1229.5px;font-size:12.5px;font-weight:bold;color:#ababab;letter-spacing:-0.02px;">Split</div>
<div class="a " style="left:1556px;top:1250px;width:214px;height:2px;background:#141414"></div>
<div class="a t" style="left:1566.0px;top:1255.5px;font-size:12.5px;font-weight:bold;color:#ababab;letter-spacing:0.55px;">Merge</div>
<div class="a " style="left:1556px;top:1276px;width:214px;height:2px;background:#141414"></div>
<div class="a t" style="left:1566.0px;top:1281.5px;font-size:12.5px;font-weight:bold;color:#ababab;letter-spacing:0.07px;">Remesh</div>
<div class="a " style="left:1556px;top:1302px;width:214px;height:2px;background:#141414"></div>
<div class="a t" style="left:1566.0px;top:1307.5px;font-size:12.5px;font-weight:bold;color:#ababab;letter-spacing:0.44px;">Project</div>
<div class="a " style="left:1556px;top:1328px;width:214px;height:2px;background:#141414"></div>
<div class="a t" style="left:1566.0px;top:1333.5px;font-size:12.5px;font-weight:bold;color:#ababab;letter-spacing:0.94px;">Extract</div>
</body></html>
